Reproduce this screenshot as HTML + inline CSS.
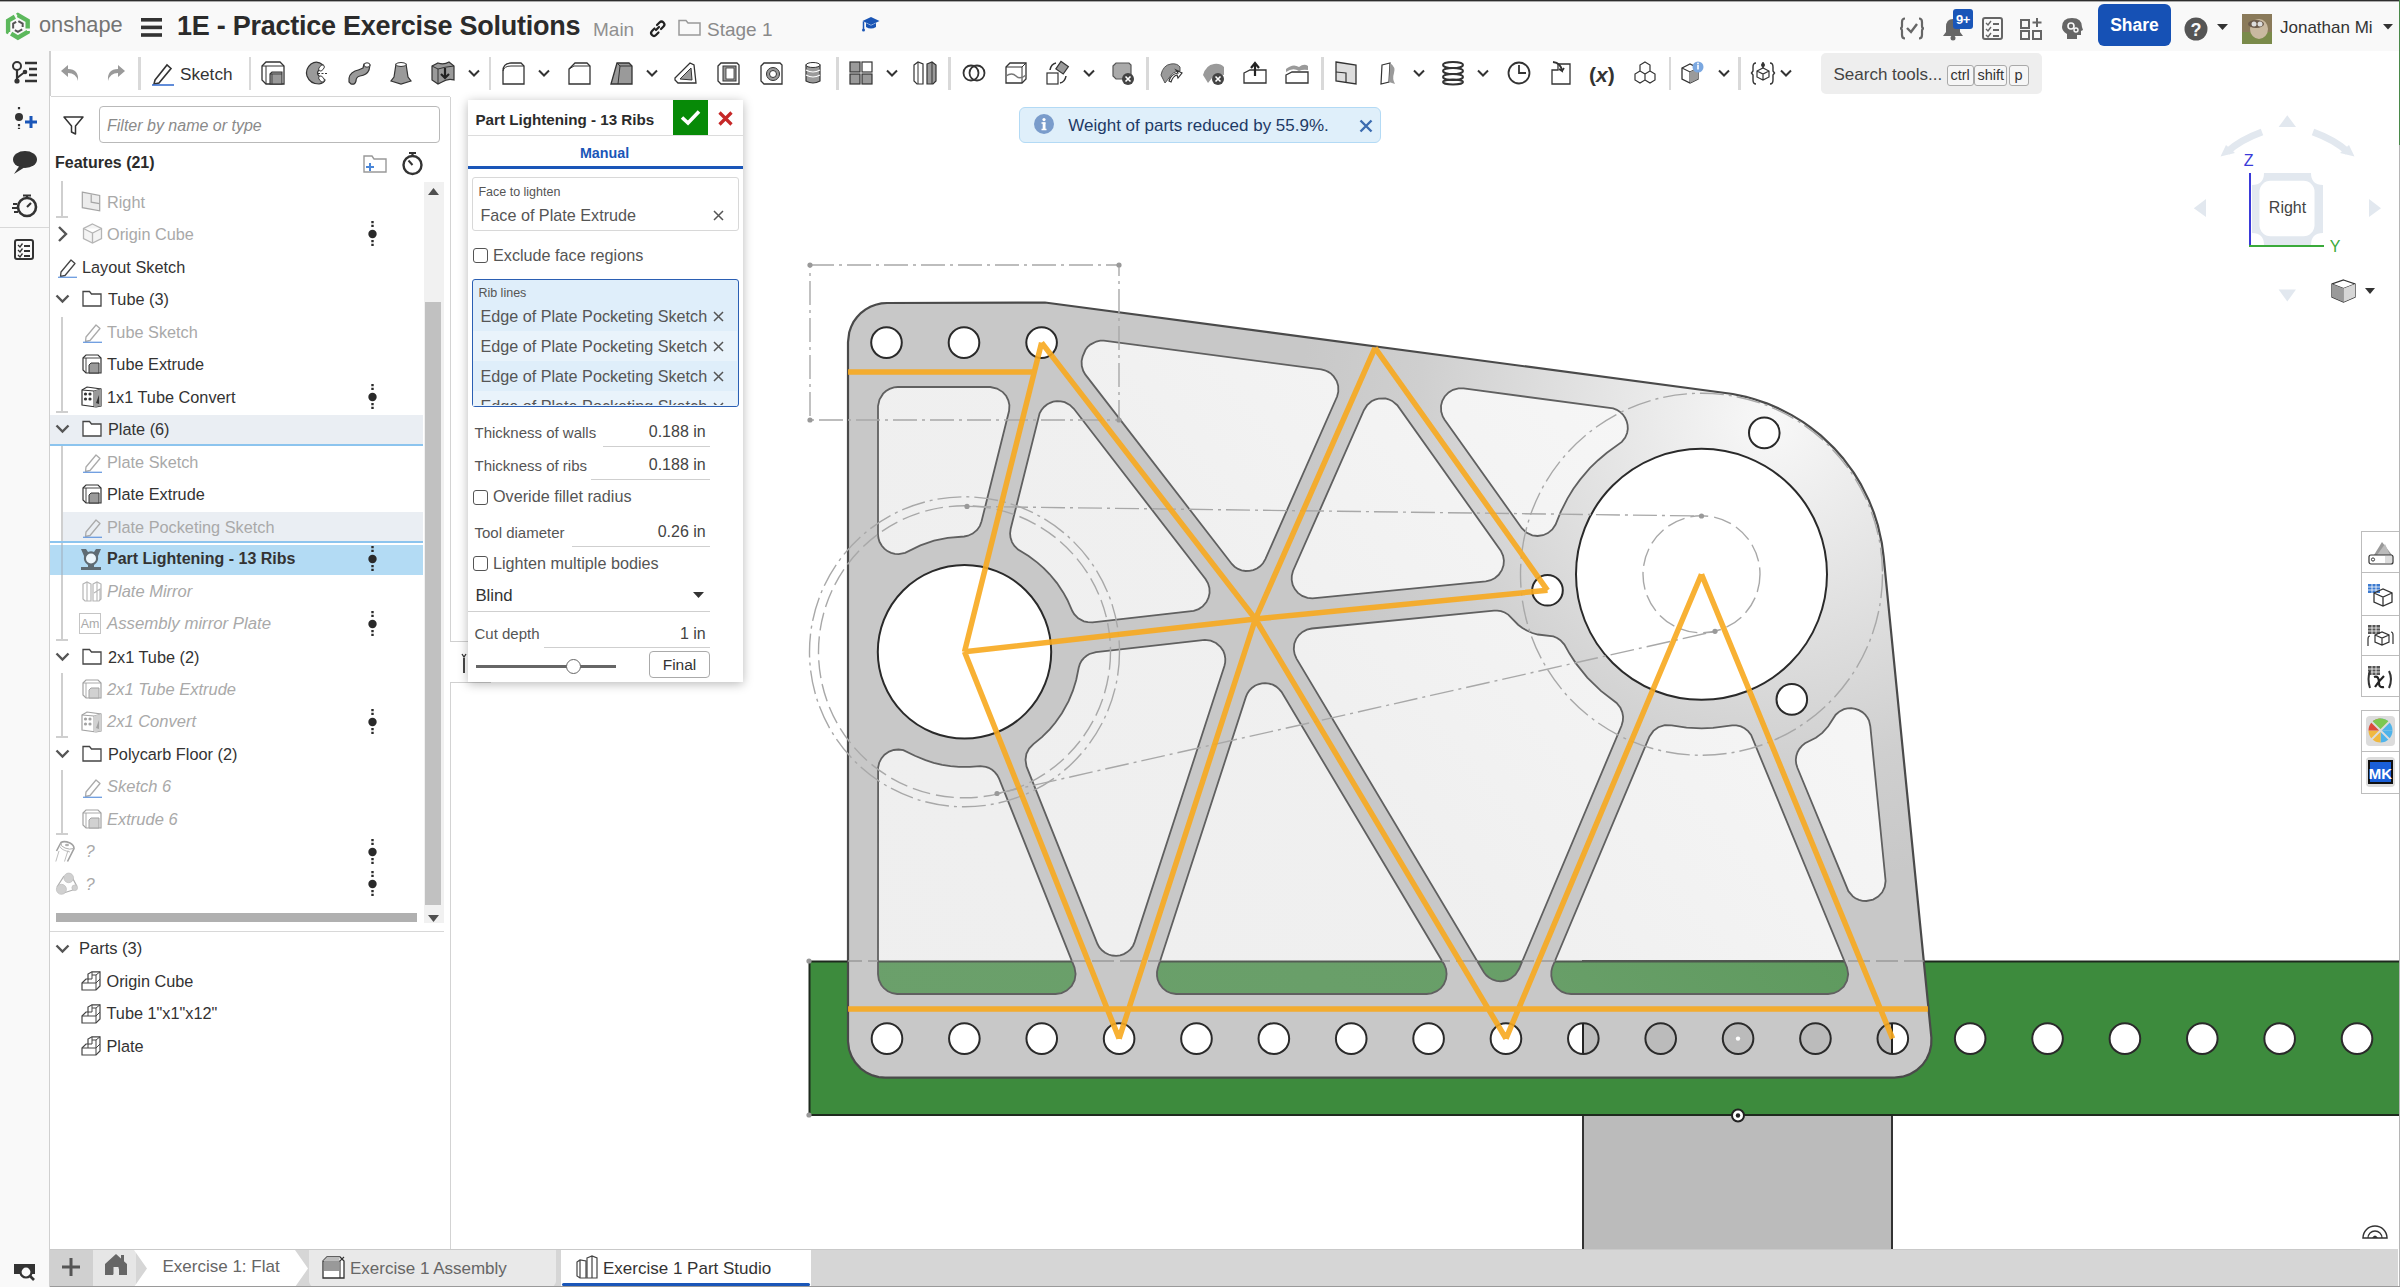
<!DOCTYPE html><html><head><meta charset="utf-8"><style>
*{margin:0;padding:0;box-sizing:border-box}
html,body{width:2400px;height:1287px;overflow:hidden;background:#fff;font-family:"Liberation Sans",sans-serif}
.t{position:absolute;white-space:nowrap;line-height:1}
svg{overflow:visible}
</style></head><body><svg style="position:absolute;left:0;top:0" width="2400" height="1287" viewBox="0 0 2400 1287">
<defs>
<radialGradient id="pg" gradientUnits="userSpaceOnUse" cx="1770" cy="420" r="470">
<stop offset="0" stop-color="#f8f8f8"/><stop offset="0.4" stop-color="#e2e2e2"/><stop offset="0.75" stop-color="#cfcfcf"/><stop offset="1" stop-color="#c8c8c8"/></radialGradient>
<linearGradient id="pkg" gradientUnits="userSpaceOnUse" x1="950" y1="1000" x2="1650" y2="380"><stop offset="0" stop-color="#cccccc" stop-opacity="0.32"/><stop offset="0.5" stop-color="#cccccc" stop-opacity="0.3"/><stop offset="1" stop-color="#cccccc" stop-opacity="0.17"/></linearGradient>
</defs>
<rect x="1583" y="961" width="309" height="300" fill="#bbbbbb" stroke="#333" stroke-width="2"/>
<path d="M809,961 L2400,961 L2400,1115 L809,1115 Z M902.30,1038.60 A15.30,15.30 0 1,0 871.70,1038.60 A15.30,15.30 0 1,0 902.30,1038.60ZM979.67,1038.60 A15.30,15.30 0 1,0 949.07,1038.60 A15.30,15.30 0 1,0 979.67,1038.60ZM1057.04,1038.60 A15.30,15.30 0 1,0 1026.44,1038.60 A15.30,15.30 0 1,0 1057.04,1038.60ZM1134.41,1038.60 A15.30,15.30 0 1,0 1103.81,1038.60 A15.30,15.30 0 1,0 1134.41,1038.60ZM1211.78,1038.60 A15.30,15.30 0 1,0 1181.18,1038.60 A15.30,15.30 0 1,0 1211.78,1038.60ZM1289.15,1038.60 A15.30,15.30 0 1,0 1258.55,1038.60 A15.30,15.30 0 1,0 1289.15,1038.60ZM1366.52,1038.60 A15.30,15.30 0 1,0 1335.92,1038.60 A15.30,15.30 0 1,0 1366.52,1038.60ZM1443.89,1038.60 A15.30,15.30 0 1,0 1413.29,1038.60 A15.30,15.30 0 1,0 1443.89,1038.60ZM1521.26,1038.60 A15.30,15.30 0 1,0 1490.66,1038.60 A15.30,15.30 0 1,0 1521.26,1038.60ZM1598.63,1038.60 A15.30,15.30 0 1,0 1568.03,1038.60 A15.30,15.30 0 1,0 1598.63,1038.60ZM1676.00,1038.60 A15.30,15.30 0 1,0 1645.40,1038.60 A15.30,15.30 0 1,0 1676.00,1038.60ZM1753.37,1038.60 A15.30,15.30 0 1,0 1722.77,1038.60 A15.30,15.30 0 1,0 1753.37,1038.60ZM1830.74,1038.60 A15.30,15.30 0 1,0 1800.14,1038.60 A15.30,15.30 0 1,0 1830.74,1038.60ZM1908.11,1038.60 A15.30,15.30 0 1,0 1877.51,1038.60 A15.30,15.30 0 1,0 1908.11,1038.60ZM1985.48,1038.60 A15.30,15.30 0 1,0 1954.88,1038.60 A15.30,15.30 0 1,0 1985.48,1038.60ZM2062.85,1038.60 A15.30,15.30 0 1,0 2032.25,1038.60 A15.30,15.30 0 1,0 2062.85,1038.60ZM2140.22,1038.60 A15.30,15.30 0 1,0 2109.62,1038.60 A15.30,15.30 0 1,0 2140.22,1038.60ZM2217.59,1038.60 A15.30,15.30 0 1,0 2186.99,1038.60 A15.30,15.30 0 1,0 2217.59,1038.60ZM2294.96,1038.60 A15.30,15.30 0 1,0 2264.36,1038.60 A15.30,15.30 0 1,0 2294.96,1038.60ZM2372.33,1038.60 A15.30,15.30 0 1,0 2341.73,1038.60 A15.30,15.30 0 1,0 2372.33,1038.60Z" fill="#3d8b3d" fill-rule="evenodd"/>
<path d="M809,961.5 L2400,961.5 M809,1115 L2400,1115 M809.5,961 L809.5,1115" stroke="#1e2a1e" stroke-width="2" fill="none"/>
<circle cx="1738" cy="1038.6" r="2.2" fill="#fff"/>
<clipPath id="matclip"><path d="M1045.0,302.5 L887.0,303.0 L881.3,303.4 L875.7,304.7 L870.3,306.7 L865.3,309.6 L860.8,313.1 L856.9,317.3 L853.5,321.9 L851.0,327.1 L849.2,332.5 L848.0,342.0 L848.0,1041.5 L849.1,1049.6 L851.6,1056.4 L855.3,1062.6 L860.8,1068.6 L866.8,1072.8 L872.5,1075.4 L878.7,1077.1 L885.0,1077.6 L1894.5,1077.6 L1902.6,1076.7 L1909.5,1074.4 L1916.5,1070.3 L1922.5,1064.8 L1926.7,1058.8 L1929.6,1052.2 L1931.2,1045.1 L1931.4,1037.9 L1883.6,556.4 L1881.8,543.0 L1877.9,525.5 L1873.8,512.6 L1868.8,500.1 L1860.7,484.1 L1853.7,472.6 L1843.0,458.2 L1834.0,448.1 L1821.0,435.7 L1810.5,427.3 L1803.2,422.1 L1791.7,415.1 L1779.7,408.9 L1767.4,403.6 L1754.6,399.2 L1746.0,396.8 L1732.8,394.0 L1045.0,302.5Z M1815.9,737.8 L1805.0,743.3 L1801.9,745.8 L1799.4,748.8 L1797.5,752.2 L1796.3,756.0 L1795.8,759.9 L1796.2,763.8 L1797.4,767.8 L1848.4,891.2 L1852.8,896.4 L1855.4,898.2 L1859.0,899.9 L1862.5,900.8 L1866.4,901.0 L1873.1,899.6 L1878.2,896.6 L1882.2,892.3 L1884.7,887.0 L1885.6,880.9 L1870.3,726.2 L1869.0,720.6 L1867.5,717.8 L1865.2,714.7 L1862.3,712.1 L1858.9,710.1 L1855.3,708.8 L1851.4,708.2 L1847.5,708.4 L1844.0,709.2 L1839.6,711.4 L1835.7,714.7 L1828.2,726.3 L1822.3,732.9 L1815.9,737.8ZM1671.6,725.4 L1664.8,725.2 L1658.3,727.2 L1653.4,730.9 L1649.5,736.4 L1552.4,967.0 L1551.4,971.1 L1551.3,975.8 L1552.3,980.6 L1554.1,984.3 L1557.1,988.2 L1561.6,991.6 L1566.2,993.4 L1571.1,994.0 L1828.1,994.0 L1833.8,993.2 L1838.5,991.1 L1843.7,986.6 L1847.0,980.6 L1848.2,974.2 L1847.0,967.4 L1751.1,734.9 L1748.1,731.1 L1744.5,728.2 L1740.8,726.4 L1736.3,725.4 L1732.2,725.3 L1713.0,727.9 L1701.6,728.3 L1686.5,727.6 L1671.6,725.4ZM1463.6,388.4 L1458.5,388.3 L1453.0,389.8 L1448.6,392.4 L1444.7,396.5 L1442.3,400.8 L1441.0,405.9 L1441.2,411.5 L1442.7,416.5 L1444.6,419.8 L1521.8,528.2 L1526.3,532.5 L1532.3,535.3 L1537.5,536.0 L1543.1,535.2 L1547.9,533.1 L1552.3,529.5 L1555.6,524.6 L1560.8,511.7 L1567.4,498.6 L1573.4,488.8 L1580.1,479.6 L1589.8,468.2 L1598.1,460.2 L1606.9,452.8 L1621.8,441.9 L1625.2,437.5 L1627.1,433.0 L1627.8,429.0 L1627.6,425.1 L1626.7,421.3 L1625.1,417.8 L1622.9,414.6 L1620.1,411.9 L1616.8,409.8 L1613.2,408.4 L1463.6,388.4ZM1311.9,628.5 L1306.9,629.6 L1302.5,631.9 L1298.9,635.1 L1296.1,639.1 L1294.3,643.7 L1293.8,649.3 L1294.6,654.1 L1296.5,658.6 L1484.0,972.5 L1486.5,975.5 L1489.3,977.8 L1492.8,979.7 L1496.5,980.8 L1500.4,981.3 L1503.6,981.0 L1507.4,980.1 L1510.7,978.5 L1515.4,974.7 L1519.0,969.1 L1621.6,725.5 L1622.8,721.0 L1623.1,716.8 L1622.3,712.3 L1620.4,707.8 L1616.6,703.0 L1600.9,690.9 L1587.3,677.6 L1575.7,663.1 L1569.5,653.6 L1564.4,644.6 L1560.4,640.2 L1557.1,638.0 L1553.4,636.4 L1537.8,634.5 L1532.3,633.0 L1527.3,630.8 L1522.4,628.0 L1518.1,624.7 L1508.2,614.6 L1504.7,612.5 L1501.0,611.1 L1497.2,610.6 L1494.0,610.6 L1311.9,628.5ZM1485.8,581.3 L1490.7,580.2 L1495.0,578.0 L1498.7,574.8 L1501.8,570.2 L1503.5,565.4 L1503.9,560.6 L1503.1,555.8 L1500.8,550.7 L1397.3,405.2 L1392.1,400.9 L1388.5,399.3 L1385.4,398.5 L1378.6,398.6 L1375.0,399.6 L1371.5,401.3 L1367.1,405.2 L1363.9,410.2 L1293.0,571.0 L1291.8,575.8 L1291.7,580.0 L1292.7,584.9 L1294.8,589.1 L1297.9,592.9 L1302.2,595.9 L1307.5,597.9 L1312.4,598.3 L1485.8,581.3ZM1426.6,994.0 L1431.6,993.4 L1436.8,991.2 L1440.9,988.1 L1443.9,984.2 L1446.0,979.0 L1446.6,974.1 L1446.0,969.0 L1444.2,964.5 L1281.5,691.9 L1279.1,689.1 L1276.2,686.6 L1272.8,684.7 L1269.1,683.6 L1265.2,683.1 L1262.0,683.3 L1258.3,684.3 L1254.9,685.8 L1251.8,688.0 L1249.5,690.3 L1247.4,693.5 L1245.9,696.9 L1157.9,967.8 L1157.0,971.8 L1157.0,975.8 L1157.7,979.7 L1159.6,984.0 L1162.7,988.1 L1166.6,991.2 L1171.1,993.2 L1176.0,994.0 L1426.6,994.0ZM1082.7,356.3 L1081.6,361.1 L1081.8,366.0 L1083.2,370.8 L1085.2,374.4 L1231.8,564.0 L1234.6,566.7 L1238.0,568.9 L1241.6,570.3 L1245.5,571.0 L1249.4,570.9 L1253.2,570.1 L1256.9,568.5 L1260.1,566.3 L1263.0,563.3 L1265.4,559.1 L1337.1,396.5 L1338.3,391.6 L1338.2,386.0 L1336.7,381.1 L1333.7,376.4 L1331.0,373.6 L1328.3,371.9 L1324.8,370.3 L1321.2,369.4 L1103.8,340.6 L1100.2,340.7 L1096.3,341.5 L1090.3,344.6 L1087.4,347.2 L1085.5,349.8 L1082.7,356.3ZM1033.4,744.1 L1029.1,748.5 L1026.4,753.9 L1025.5,759.8 L1026.5,766.4 L1097.5,944.0 L1099.4,947.4 L1102.0,950.3 L1105.1,952.7 L1108.6,954.5 L1112.3,955.5 L1116.2,955.8 L1120.1,955.3 L1123.8,954.1 L1127.2,952.1 L1130.4,949.4 L1133.1,945.7 L1134.7,941.9 L1224.4,666.0 L1225.2,662.4 L1225.3,658.5 L1224.6,654.6 L1223.3,651.0 L1220.4,646.8 L1216.0,643.0 L1210.7,640.6 L1204.9,639.9 L1096.0,652.1 L1089.4,654.0 L1086.6,655.7 L1083.8,658.1 L1081.7,660.6 L1079.9,663.9 L1078.7,667.7 L1076.2,680.0 L1072.9,690.7 L1068.6,701.2 L1061.9,713.3 L1055.4,722.5 L1049.7,729.3 L1041.9,737.1 L1033.4,744.1ZM1010.7,528.7 L1010.1,533.4 L1010.5,537.5 L1012.0,542.1 L1014.4,546.0 L1018.1,549.6 L1028.6,556.1 L1037.4,562.6 L1043.9,568.3 L1049.7,574.3 L1057.0,583.1 L1063.2,592.4 L1067.4,600.0 L1072.2,610.8 L1074.2,614.1 L1078.2,618.3 L1083.9,621.3 L1087.9,622.2 L1092.5,622.3 L1193.7,610.8 L1198.6,609.1 L1202.7,606.4 L1206.4,602.1 L1208.5,597.7 L1209.6,592.9 L1209.4,588.0 L1208.0,583.3 L1205.5,579.0 L1073.9,408.8 L1069.8,404.9 L1064.7,402.2 L1060.9,401.3 L1057.0,401.2 L1053.2,401.7 L1050.2,402.8 L1047.0,404.5 L1044.0,407.0 L1041.5,410.0 L1039.6,413.4 L1010.7,528.7ZM915.4,756.0 L903.3,750.2 L898.5,749.5 L893.7,750.0 L889.1,751.6 L884.5,754.7 L881.4,758.4 L879.2,762.7 L878.1,767.5 L878.0,974.1 L878.8,979.7 L881.3,985.0 L883.9,988.2 L887.8,991.2 L892.3,993.2 L897.1,994.0 L1055.6,994.0 L1061.5,993.1 L1066.7,990.6 L1071.7,985.9 L1074.6,980.1 L1075.6,974.1 L1074.5,967.6 L999.1,778.7 L997.2,775.1 L994.8,772.1 L992.1,769.8 L988.7,767.8 L985.8,766.8 L980.3,766.1 L970.0,766.9 L958.9,766.9 L950.5,766.1 L942.2,764.8 L933.7,762.8 L925.5,760.2 L915.4,756.0ZM878.0,534.0 L878.4,538.1 L879.5,541.8 L881.8,545.8 L884.3,548.7 L887.4,551.1 L891.1,552.9 L894.9,553.8 L898.7,554.1 L905.1,552.8 L920.4,545.4 L934.0,540.7 L947.7,537.8 L964.2,536.5 L968.0,535.7 L972.7,533.6 L977.1,529.9 L979.9,525.9 L981.5,521.5 L1009.1,410.8 L1009.4,405.1 L1008.3,400.4 L1006.2,396.0 L1002.8,392.1 L997.0,388.5 L990.3,387.0 L897.9,387.0 L894.0,387.4 L889.6,388.9 L886.0,391.0 L883.1,393.7 L879.5,399.5 L878.0,406.1 L878.0,534.0Z M902.30,1038.60 A15.30,15.30 0 1,0 871.70,1038.60 A15.30,15.30 0 1,0 902.30,1038.60ZM979.67,1038.60 A15.30,15.30 0 1,0 949.07,1038.60 A15.30,15.30 0 1,0 979.67,1038.60ZM1057.04,1038.60 A15.30,15.30 0 1,0 1026.44,1038.60 A15.30,15.30 0 1,0 1057.04,1038.60ZM1134.41,1038.60 A15.30,15.30 0 1,0 1103.81,1038.60 A15.30,15.30 0 1,0 1134.41,1038.60ZM1211.78,1038.60 A15.30,15.30 0 1,0 1181.18,1038.60 A15.30,15.30 0 1,0 1211.78,1038.60ZM1289.15,1038.60 A15.30,15.30 0 1,0 1258.55,1038.60 A15.30,15.30 0 1,0 1289.15,1038.60ZM1366.52,1038.60 A15.30,15.30 0 1,0 1335.92,1038.60 A15.30,15.30 0 1,0 1366.52,1038.60ZM1443.89,1038.60 A15.30,15.30 0 1,0 1413.29,1038.60 A15.30,15.30 0 1,0 1443.89,1038.60ZM1521.26,1038.60 A15.30,15.30 0 1,0 1490.66,1038.60 A15.30,15.30 0 1,0 1521.26,1038.60ZM1598.63,1038.60 A15.30,15.30 0 1,0 1568.03,1038.60 A15.30,15.30 0 1,0 1598.63,1038.60ZM1676.00,1038.60 A15.30,15.30 0 1,0 1645.40,1038.60 A15.30,15.30 0 1,0 1676.00,1038.60ZM1753.37,1038.60 A15.30,15.30 0 1,0 1722.77,1038.60 A15.30,15.30 0 1,0 1753.37,1038.60ZM1830.74,1038.60 A15.30,15.30 0 1,0 1800.14,1038.60 A15.30,15.30 0 1,0 1830.74,1038.60ZM1908.11,1038.60 A15.30,15.30 0 1,0 1877.51,1038.60 A15.30,15.30 0 1,0 1908.11,1038.60ZM901.80,342.60 A15.30,15.30 0 1,0 871.20,342.60 A15.30,15.30 0 1,0 901.80,342.60ZM979.30,342.60 A15.30,15.30 0 1,0 948.70,342.60 A15.30,15.30 0 1,0 979.30,342.60ZM1056.90,342.60 A15.30,15.30 0 1,0 1026.30,342.60 A15.30,15.30 0 1,0 1056.90,342.60ZM1779.60,432.90 A15.30,15.30 0 1,0 1749.00,432.90 A15.30,15.30 0 1,0 1779.60,432.90ZM1807.10,699.40 A15.30,15.30 0 1,0 1776.50,699.40 A15.30,15.30 0 1,0 1807.10,699.40ZM1562.80,590.30 A15.30,15.30 0 1,0 1532.20,590.30 A15.30,15.30 0 1,0 1562.80,590.30ZM1051.20,651.80 A86.70,86.70 0 1,0 877.80,651.80 A86.70,86.70 0 1,0 1051.20,651.80ZM1827.00,574.30 A125.50,125.50 0 1,0 1576.00,574.30 A125.50,125.50 0 1,0 1827.00,574.30Z" clip-rule="evenodd"/></clipPath>
<path d="M1045.0,302.5 L887.0,303.0 L881.3,303.4 L875.7,304.7 L870.3,306.7 L865.3,309.6 L860.8,313.1 L856.9,317.3 L853.5,321.9 L851.0,327.1 L849.2,332.5 L848.0,342.0 L848.0,1041.5 L849.1,1049.6 L851.6,1056.4 L855.3,1062.6 L860.8,1068.6 L866.8,1072.8 L872.5,1075.4 L878.7,1077.1 L885.0,1077.6 L1894.5,1077.6 L1902.6,1076.7 L1909.5,1074.4 L1916.5,1070.3 L1922.5,1064.8 L1926.7,1058.8 L1929.6,1052.2 L1931.2,1045.1 L1931.4,1037.9 L1883.6,556.4 L1881.8,543.0 L1877.9,525.5 L1873.8,512.6 L1868.8,500.1 L1860.7,484.1 L1853.7,472.6 L1843.0,458.2 L1834.0,448.1 L1821.0,435.7 L1810.5,427.3 L1803.2,422.1 L1791.7,415.1 L1779.7,408.9 L1767.4,403.6 L1754.6,399.2 L1746.0,396.8 L1732.8,394.0 L1045.0,302.5Z M1815.9,737.8 L1805.0,743.3 L1801.9,745.8 L1799.4,748.8 L1797.5,752.2 L1796.3,756.0 L1795.8,759.9 L1796.2,763.8 L1797.4,767.8 L1848.4,891.2 L1852.8,896.4 L1855.4,898.2 L1859.0,899.9 L1862.5,900.8 L1866.4,901.0 L1873.1,899.6 L1878.2,896.6 L1882.2,892.3 L1884.7,887.0 L1885.6,880.9 L1870.3,726.2 L1869.0,720.6 L1867.5,717.8 L1865.2,714.7 L1862.3,712.1 L1858.9,710.1 L1855.3,708.8 L1851.4,708.2 L1847.5,708.4 L1844.0,709.2 L1839.6,711.4 L1835.7,714.7 L1828.2,726.3 L1822.3,732.9 L1815.9,737.8ZM1671.6,725.4 L1664.8,725.2 L1658.3,727.2 L1653.4,730.9 L1649.5,736.4 L1552.4,967.0 L1551.4,971.1 L1551.3,975.8 L1552.3,980.6 L1554.1,984.3 L1557.1,988.2 L1561.6,991.6 L1566.2,993.4 L1571.1,994.0 L1828.1,994.0 L1833.8,993.2 L1838.5,991.1 L1843.7,986.6 L1847.0,980.6 L1848.2,974.2 L1847.0,967.4 L1751.1,734.9 L1748.1,731.1 L1744.5,728.2 L1740.8,726.4 L1736.3,725.4 L1732.2,725.3 L1713.0,727.9 L1701.6,728.3 L1686.5,727.6 L1671.6,725.4ZM1463.6,388.4 L1458.5,388.3 L1453.0,389.8 L1448.6,392.4 L1444.7,396.5 L1442.3,400.8 L1441.0,405.9 L1441.2,411.5 L1442.7,416.5 L1444.6,419.8 L1521.8,528.2 L1526.3,532.5 L1532.3,535.3 L1537.5,536.0 L1543.1,535.2 L1547.9,533.1 L1552.3,529.5 L1555.6,524.6 L1560.8,511.7 L1567.4,498.6 L1573.4,488.8 L1580.1,479.6 L1589.8,468.2 L1598.1,460.2 L1606.9,452.8 L1621.8,441.9 L1625.2,437.5 L1627.1,433.0 L1627.8,429.0 L1627.6,425.1 L1626.7,421.3 L1625.1,417.8 L1622.9,414.6 L1620.1,411.9 L1616.8,409.8 L1613.2,408.4 L1463.6,388.4ZM1311.9,628.5 L1306.9,629.6 L1302.5,631.9 L1298.9,635.1 L1296.1,639.1 L1294.3,643.7 L1293.8,649.3 L1294.6,654.1 L1296.5,658.6 L1484.0,972.5 L1486.5,975.5 L1489.3,977.8 L1492.8,979.7 L1496.5,980.8 L1500.4,981.3 L1503.6,981.0 L1507.4,980.1 L1510.7,978.5 L1515.4,974.7 L1519.0,969.1 L1621.6,725.5 L1622.8,721.0 L1623.1,716.8 L1622.3,712.3 L1620.4,707.8 L1616.6,703.0 L1600.9,690.9 L1587.3,677.6 L1575.7,663.1 L1569.5,653.6 L1564.4,644.6 L1560.4,640.2 L1557.1,638.0 L1553.4,636.4 L1537.8,634.5 L1532.3,633.0 L1527.3,630.8 L1522.4,628.0 L1518.1,624.7 L1508.2,614.6 L1504.7,612.5 L1501.0,611.1 L1497.2,610.6 L1494.0,610.6 L1311.9,628.5ZM1485.8,581.3 L1490.7,580.2 L1495.0,578.0 L1498.7,574.8 L1501.8,570.2 L1503.5,565.4 L1503.9,560.6 L1503.1,555.8 L1500.8,550.7 L1397.3,405.2 L1392.1,400.9 L1388.5,399.3 L1385.4,398.5 L1378.6,398.6 L1375.0,399.6 L1371.5,401.3 L1367.1,405.2 L1363.9,410.2 L1293.0,571.0 L1291.8,575.8 L1291.7,580.0 L1292.7,584.9 L1294.8,589.1 L1297.9,592.9 L1302.2,595.9 L1307.5,597.9 L1312.4,598.3 L1485.8,581.3ZM1426.6,994.0 L1431.6,993.4 L1436.8,991.2 L1440.9,988.1 L1443.9,984.2 L1446.0,979.0 L1446.6,974.1 L1446.0,969.0 L1444.2,964.5 L1281.5,691.9 L1279.1,689.1 L1276.2,686.6 L1272.8,684.7 L1269.1,683.6 L1265.2,683.1 L1262.0,683.3 L1258.3,684.3 L1254.9,685.8 L1251.8,688.0 L1249.5,690.3 L1247.4,693.5 L1245.9,696.9 L1157.9,967.8 L1157.0,971.8 L1157.0,975.8 L1157.7,979.7 L1159.6,984.0 L1162.7,988.1 L1166.6,991.2 L1171.1,993.2 L1176.0,994.0 L1426.6,994.0ZM1082.7,356.3 L1081.6,361.1 L1081.8,366.0 L1083.2,370.8 L1085.2,374.4 L1231.8,564.0 L1234.6,566.7 L1238.0,568.9 L1241.6,570.3 L1245.5,571.0 L1249.4,570.9 L1253.2,570.1 L1256.9,568.5 L1260.1,566.3 L1263.0,563.3 L1265.4,559.1 L1337.1,396.5 L1338.3,391.6 L1338.2,386.0 L1336.7,381.1 L1333.7,376.4 L1331.0,373.6 L1328.3,371.9 L1324.8,370.3 L1321.2,369.4 L1103.8,340.6 L1100.2,340.7 L1096.3,341.5 L1090.3,344.6 L1087.4,347.2 L1085.5,349.8 L1082.7,356.3ZM1033.4,744.1 L1029.1,748.5 L1026.4,753.9 L1025.5,759.8 L1026.5,766.4 L1097.5,944.0 L1099.4,947.4 L1102.0,950.3 L1105.1,952.7 L1108.6,954.5 L1112.3,955.5 L1116.2,955.8 L1120.1,955.3 L1123.8,954.1 L1127.2,952.1 L1130.4,949.4 L1133.1,945.7 L1134.7,941.9 L1224.4,666.0 L1225.2,662.4 L1225.3,658.5 L1224.6,654.6 L1223.3,651.0 L1220.4,646.8 L1216.0,643.0 L1210.7,640.6 L1204.9,639.9 L1096.0,652.1 L1089.4,654.0 L1086.6,655.7 L1083.8,658.1 L1081.7,660.6 L1079.9,663.9 L1078.7,667.7 L1076.2,680.0 L1072.9,690.7 L1068.6,701.2 L1061.9,713.3 L1055.4,722.5 L1049.7,729.3 L1041.9,737.1 L1033.4,744.1ZM1010.7,528.7 L1010.1,533.4 L1010.5,537.5 L1012.0,542.1 L1014.4,546.0 L1018.1,549.6 L1028.6,556.1 L1037.4,562.6 L1043.9,568.3 L1049.7,574.3 L1057.0,583.1 L1063.2,592.4 L1067.4,600.0 L1072.2,610.8 L1074.2,614.1 L1078.2,618.3 L1083.9,621.3 L1087.9,622.2 L1092.5,622.3 L1193.7,610.8 L1198.6,609.1 L1202.7,606.4 L1206.4,602.1 L1208.5,597.7 L1209.6,592.9 L1209.4,588.0 L1208.0,583.3 L1205.5,579.0 L1073.9,408.8 L1069.8,404.9 L1064.7,402.2 L1060.9,401.3 L1057.0,401.2 L1053.2,401.7 L1050.2,402.8 L1047.0,404.5 L1044.0,407.0 L1041.5,410.0 L1039.6,413.4 L1010.7,528.7ZM915.4,756.0 L903.3,750.2 L898.5,749.5 L893.7,750.0 L889.1,751.6 L884.5,754.7 L881.4,758.4 L879.2,762.7 L878.1,767.5 L878.0,974.1 L878.8,979.7 L881.3,985.0 L883.9,988.2 L887.8,991.2 L892.3,993.2 L897.1,994.0 L1055.6,994.0 L1061.5,993.1 L1066.7,990.6 L1071.7,985.9 L1074.6,980.1 L1075.6,974.1 L1074.5,967.6 L999.1,778.7 L997.2,775.1 L994.8,772.1 L992.1,769.8 L988.7,767.8 L985.8,766.8 L980.3,766.1 L970.0,766.9 L958.9,766.9 L950.5,766.1 L942.2,764.8 L933.7,762.8 L925.5,760.2 L915.4,756.0ZM878.0,534.0 L878.4,538.1 L879.5,541.8 L881.8,545.8 L884.3,548.7 L887.4,551.1 L891.1,552.9 L894.9,553.8 L898.7,554.1 L905.1,552.8 L920.4,545.4 L934.0,540.7 L947.7,537.8 L964.2,536.5 L968.0,535.7 L972.7,533.6 L977.1,529.9 L979.9,525.9 L981.5,521.5 L1009.1,410.8 L1009.4,405.1 L1008.3,400.4 L1006.2,396.0 L1002.8,392.1 L997.0,388.5 L990.3,387.0 L897.9,387.0 L894.0,387.4 L889.6,388.9 L886.0,391.0 L883.1,393.7 L879.5,399.5 L878.0,406.1 L878.0,534.0Z M902.30,1038.60 A15.30,15.30 0 1,0 871.70,1038.60 A15.30,15.30 0 1,0 902.30,1038.60ZM979.67,1038.60 A15.30,15.30 0 1,0 949.07,1038.60 A15.30,15.30 0 1,0 979.67,1038.60ZM1057.04,1038.60 A15.30,15.30 0 1,0 1026.44,1038.60 A15.30,15.30 0 1,0 1057.04,1038.60ZM1134.41,1038.60 A15.30,15.30 0 1,0 1103.81,1038.60 A15.30,15.30 0 1,0 1134.41,1038.60ZM1211.78,1038.60 A15.30,15.30 0 1,0 1181.18,1038.60 A15.30,15.30 0 1,0 1211.78,1038.60ZM1289.15,1038.60 A15.30,15.30 0 1,0 1258.55,1038.60 A15.30,15.30 0 1,0 1289.15,1038.60ZM1366.52,1038.60 A15.30,15.30 0 1,0 1335.92,1038.60 A15.30,15.30 0 1,0 1366.52,1038.60ZM1443.89,1038.60 A15.30,15.30 0 1,0 1413.29,1038.60 A15.30,15.30 0 1,0 1443.89,1038.60ZM1521.26,1038.60 A15.30,15.30 0 1,0 1490.66,1038.60 A15.30,15.30 0 1,0 1521.26,1038.60ZM1598.63,1038.60 A15.30,15.30 0 1,0 1568.03,1038.60 A15.30,15.30 0 1,0 1598.63,1038.60ZM1676.00,1038.60 A15.30,15.30 0 1,0 1645.40,1038.60 A15.30,15.30 0 1,0 1676.00,1038.60ZM1753.37,1038.60 A15.30,15.30 0 1,0 1722.77,1038.60 A15.30,15.30 0 1,0 1753.37,1038.60ZM1830.74,1038.60 A15.30,15.30 0 1,0 1800.14,1038.60 A15.30,15.30 0 1,0 1830.74,1038.60ZM1908.11,1038.60 A15.30,15.30 0 1,0 1877.51,1038.60 A15.30,15.30 0 1,0 1908.11,1038.60ZM901.80,342.60 A15.30,15.30 0 1,0 871.20,342.60 A15.30,15.30 0 1,0 901.80,342.60ZM979.30,342.60 A15.30,15.30 0 1,0 948.70,342.60 A15.30,15.30 0 1,0 979.30,342.60ZM1056.90,342.60 A15.30,15.30 0 1,0 1026.30,342.60 A15.30,15.30 0 1,0 1056.90,342.60ZM1779.60,432.90 A15.30,15.30 0 1,0 1749.00,432.90 A15.30,15.30 0 1,0 1779.60,432.90ZM1807.10,699.40 A15.30,15.30 0 1,0 1776.50,699.40 A15.30,15.30 0 1,0 1807.10,699.40ZM1562.80,590.30 A15.30,15.30 0 1,0 1532.20,590.30 A15.30,15.30 0 1,0 1562.80,590.30ZM1051.20,651.80 A86.70,86.70 0 1,0 877.80,651.80 A86.70,86.70 0 1,0 1051.20,651.80ZM1827.00,574.30 A125.50,125.50 0 1,0 1576.00,574.30 A125.50,125.50 0 1,0 1827.00,574.30Z" fill="url(#pg)" fill-rule="evenodd"/>
<path d="M1045.0,302.5 L887.0,303.0 L881.3,303.4 L875.7,304.7 L870.3,306.7 L865.3,309.6 L860.8,313.1 L856.9,317.3 L853.5,321.9 L851.0,327.1 L849.2,332.5 L848.0,342.0 L848.0,1041.5 L849.1,1049.6 L851.6,1056.4 L855.3,1062.6 L860.8,1068.6 L866.8,1072.8 L872.5,1075.4 L878.7,1077.1 L885.0,1077.6 L1894.5,1077.6 L1902.6,1076.7 L1909.5,1074.4 L1916.5,1070.3 L1922.5,1064.8 L1926.7,1058.8 L1929.6,1052.2 L1931.2,1045.1 L1931.4,1037.9 L1883.6,556.4 L1881.8,543.0 L1877.9,525.5 L1873.8,512.6 L1868.8,500.1 L1860.7,484.1 L1853.7,472.6 L1843.0,458.2 L1834.0,448.1 L1821.0,435.7 L1810.5,427.3 L1803.2,422.1 L1791.7,415.1 L1779.7,408.9 L1767.4,403.6 L1754.6,399.2 L1746.0,396.8 L1732.8,394.0 L1045.0,302.5Z" fill="none" stroke="#4a4a4a" stroke-width="2.2"/>
<path d="M1815.9,737.8 L1805.0,743.3 L1801.9,745.8 L1799.4,748.8 L1797.5,752.2 L1796.3,756.0 L1795.8,759.9 L1796.2,763.8 L1797.4,767.8 L1848.4,891.2 L1852.8,896.4 L1855.4,898.2 L1859.0,899.9 L1862.5,900.8 L1866.4,901.0 L1873.1,899.6 L1878.2,896.6 L1882.2,892.3 L1884.7,887.0 L1885.6,880.9 L1870.3,726.2 L1869.0,720.6 L1867.5,717.8 L1865.2,714.7 L1862.3,712.1 L1858.9,710.1 L1855.3,708.8 L1851.4,708.2 L1847.5,708.4 L1844.0,709.2 L1839.6,711.4 L1835.7,714.7 L1828.2,726.3 L1822.3,732.9 L1815.9,737.8ZM1671.6,725.4 L1664.8,725.2 L1658.3,727.2 L1653.4,730.9 L1649.5,736.4 L1552.4,967.0 L1551.4,971.1 L1551.3,975.8 L1552.3,980.6 L1554.1,984.3 L1557.1,988.2 L1561.6,991.6 L1566.2,993.4 L1571.1,994.0 L1828.1,994.0 L1833.8,993.2 L1838.5,991.1 L1843.7,986.6 L1847.0,980.6 L1848.2,974.2 L1847.0,967.4 L1751.1,734.9 L1748.1,731.1 L1744.5,728.2 L1740.8,726.4 L1736.3,725.4 L1732.2,725.3 L1713.0,727.9 L1701.6,728.3 L1686.5,727.6 L1671.6,725.4ZM1463.6,388.4 L1458.5,388.3 L1453.0,389.8 L1448.6,392.4 L1444.7,396.5 L1442.3,400.8 L1441.0,405.9 L1441.2,411.5 L1442.7,416.5 L1444.6,419.8 L1521.8,528.2 L1526.3,532.5 L1532.3,535.3 L1537.5,536.0 L1543.1,535.2 L1547.9,533.1 L1552.3,529.5 L1555.6,524.6 L1560.8,511.7 L1567.4,498.6 L1573.4,488.8 L1580.1,479.6 L1589.8,468.2 L1598.1,460.2 L1606.9,452.8 L1621.8,441.9 L1625.2,437.5 L1627.1,433.0 L1627.8,429.0 L1627.6,425.1 L1626.7,421.3 L1625.1,417.8 L1622.9,414.6 L1620.1,411.9 L1616.8,409.8 L1613.2,408.4 L1463.6,388.4ZM1311.9,628.5 L1306.9,629.6 L1302.5,631.9 L1298.9,635.1 L1296.1,639.1 L1294.3,643.7 L1293.8,649.3 L1294.6,654.1 L1296.5,658.6 L1484.0,972.5 L1486.5,975.5 L1489.3,977.8 L1492.8,979.7 L1496.5,980.8 L1500.4,981.3 L1503.6,981.0 L1507.4,980.1 L1510.7,978.5 L1515.4,974.7 L1519.0,969.1 L1621.6,725.5 L1622.8,721.0 L1623.1,716.8 L1622.3,712.3 L1620.4,707.8 L1616.6,703.0 L1600.9,690.9 L1587.3,677.6 L1575.7,663.1 L1569.5,653.6 L1564.4,644.6 L1560.4,640.2 L1557.1,638.0 L1553.4,636.4 L1537.8,634.5 L1532.3,633.0 L1527.3,630.8 L1522.4,628.0 L1518.1,624.7 L1508.2,614.6 L1504.7,612.5 L1501.0,611.1 L1497.2,610.6 L1494.0,610.6 L1311.9,628.5ZM1485.8,581.3 L1490.7,580.2 L1495.0,578.0 L1498.7,574.8 L1501.8,570.2 L1503.5,565.4 L1503.9,560.6 L1503.1,555.8 L1500.8,550.7 L1397.3,405.2 L1392.1,400.9 L1388.5,399.3 L1385.4,398.5 L1378.6,398.6 L1375.0,399.6 L1371.5,401.3 L1367.1,405.2 L1363.9,410.2 L1293.0,571.0 L1291.8,575.8 L1291.7,580.0 L1292.7,584.9 L1294.8,589.1 L1297.9,592.9 L1302.2,595.9 L1307.5,597.9 L1312.4,598.3 L1485.8,581.3ZM1426.6,994.0 L1431.6,993.4 L1436.8,991.2 L1440.9,988.1 L1443.9,984.2 L1446.0,979.0 L1446.6,974.1 L1446.0,969.0 L1444.2,964.5 L1281.5,691.9 L1279.1,689.1 L1276.2,686.6 L1272.8,684.7 L1269.1,683.6 L1265.2,683.1 L1262.0,683.3 L1258.3,684.3 L1254.9,685.8 L1251.8,688.0 L1249.5,690.3 L1247.4,693.5 L1245.9,696.9 L1157.9,967.8 L1157.0,971.8 L1157.0,975.8 L1157.7,979.7 L1159.6,984.0 L1162.7,988.1 L1166.6,991.2 L1171.1,993.2 L1176.0,994.0 L1426.6,994.0ZM1082.7,356.3 L1081.6,361.1 L1081.8,366.0 L1083.2,370.8 L1085.2,374.4 L1231.8,564.0 L1234.6,566.7 L1238.0,568.9 L1241.6,570.3 L1245.5,571.0 L1249.4,570.9 L1253.2,570.1 L1256.9,568.5 L1260.1,566.3 L1263.0,563.3 L1265.4,559.1 L1337.1,396.5 L1338.3,391.6 L1338.2,386.0 L1336.7,381.1 L1333.7,376.4 L1331.0,373.6 L1328.3,371.9 L1324.8,370.3 L1321.2,369.4 L1103.8,340.6 L1100.2,340.7 L1096.3,341.5 L1090.3,344.6 L1087.4,347.2 L1085.5,349.8 L1082.7,356.3ZM1033.4,744.1 L1029.1,748.5 L1026.4,753.9 L1025.5,759.8 L1026.5,766.4 L1097.5,944.0 L1099.4,947.4 L1102.0,950.3 L1105.1,952.7 L1108.6,954.5 L1112.3,955.5 L1116.2,955.8 L1120.1,955.3 L1123.8,954.1 L1127.2,952.1 L1130.4,949.4 L1133.1,945.7 L1134.7,941.9 L1224.4,666.0 L1225.2,662.4 L1225.3,658.5 L1224.6,654.6 L1223.3,651.0 L1220.4,646.8 L1216.0,643.0 L1210.7,640.6 L1204.9,639.9 L1096.0,652.1 L1089.4,654.0 L1086.6,655.7 L1083.8,658.1 L1081.7,660.6 L1079.9,663.9 L1078.7,667.7 L1076.2,680.0 L1072.9,690.7 L1068.6,701.2 L1061.9,713.3 L1055.4,722.5 L1049.7,729.3 L1041.9,737.1 L1033.4,744.1ZM1010.7,528.7 L1010.1,533.4 L1010.5,537.5 L1012.0,542.1 L1014.4,546.0 L1018.1,549.6 L1028.6,556.1 L1037.4,562.6 L1043.9,568.3 L1049.7,574.3 L1057.0,583.1 L1063.2,592.4 L1067.4,600.0 L1072.2,610.8 L1074.2,614.1 L1078.2,618.3 L1083.9,621.3 L1087.9,622.2 L1092.5,622.3 L1193.7,610.8 L1198.6,609.1 L1202.7,606.4 L1206.4,602.1 L1208.5,597.7 L1209.6,592.9 L1209.4,588.0 L1208.0,583.3 L1205.5,579.0 L1073.9,408.8 L1069.8,404.9 L1064.7,402.2 L1060.9,401.3 L1057.0,401.2 L1053.2,401.7 L1050.2,402.8 L1047.0,404.5 L1044.0,407.0 L1041.5,410.0 L1039.6,413.4 L1010.7,528.7ZM915.4,756.0 L903.3,750.2 L898.5,749.5 L893.7,750.0 L889.1,751.6 L884.5,754.7 L881.4,758.4 L879.2,762.7 L878.1,767.5 L878.0,974.1 L878.8,979.7 L881.3,985.0 L883.9,988.2 L887.8,991.2 L892.3,993.2 L897.1,994.0 L1055.6,994.0 L1061.5,993.1 L1066.7,990.6 L1071.7,985.9 L1074.6,980.1 L1075.6,974.1 L1074.5,967.6 L999.1,778.7 L997.2,775.1 L994.8,772.1 L992.1,769.8 L988.7,767.8 L985.8,766.8 L980.3,766.1 L970.0,766.9 L958.9,766.9 L950.5,766.1 L942.2,764.8 L933.7,762.8 L925.5,760.2 L915.4,756.0ZM878.0,534.0 L878.4,538.1 L879.5,541.8 L881.8,545.8 L884.3,548.7 L887.4,551.1 L891.1,552.9 L894.9,553.8 L898.7,554.1 L905.1,552.8 L920.4,545.4 L934.0,540.7 L947.7,537.8 L964.2,536.5 L968.0,535.7 L972.7,533.6 L977.1,529.9 L979.9,525.9 L981.5,521.5 L1009.1,410.8 L1009.4,405.1 L1008.3,400.4 L1006.2,396.0 L1002.8,392.1 L997.0,388.5 L990.3,387.0 L897.9,387.0 L894.0,387.4 L889.6,388.9 L886.0,391.0 L883.1,393.7 L879.5,399.5 L878.0,406.1 L878.0,534.0Z" fill="url(#pkg)" stroke="#606060" stroke-width="1.8"/>
<path d="M902.30,1038.60 A15.30,15.30 0 1,0 871.70,1038.60 A15.30,15.30 0 1,0 902.30,1038.60ZM979.67,1038.60 A15.30,15.30 0 1,0 949.07,1038.60 A15.30,15.30 0 1,0 979.67,1038.60ZM1057.04,1038.60 A15.30,15.30 0 1,0 1026.44,1038.60 A15.30,15.30 0 1,0 1057.04,1038.60ZM1134.41,1038.60 A15.30,15.30 0 1,0 1103.81,1038.60 A15.30,15.30 0 1,0 1134.41,1038.60ZM1211.78,1038.60 A15.30,15.30 0 1,0 1181.18,1038.60 A15.30,15.30 0 1,0 1211.78,1038.60ZM1289.15,1038.60 A15.30,15.30 0 1,0 1258.55,1038.60 A15.30,15.30 0 1,0 1289.15,1038.60ZM1366.52,1038.60 A15.30,15.30 0 1,0 1335.92,1038.60 A15.30,15.30 0 1,0 1366.52,1038.60ZM1443.89,1038.60 A15.30,15.30 0 1,0 1413.29,1038.60 A15.30,15.30 0 1,0 1443.89,1038.60ZM1521.26,1038.60 A15.30,15.30 0 1,0 1490.66,1038.60 A15.30,15.30 0 1,0 1521.26,1038.60ZM1598.63,1038.60 A15.30,15.30 0 1,0 1568.03,1038.60 A15.30,15.30 0 1,0 1598.63,1038.60ZM1676.00,1038.60 A15.30,15.30 0 1,0 1645.40,1038.60 A15.30,15.30 0 1,0 1676.00,1038.60ZM1753.37,1038.60 A15.30,15.30 0 1,0 1722.77,1038.60 A15.30,15.30 0 1,0 1753.37,1038.60ZM1830.74,1038.60 A15.30,15.30 0 1,0 1800.14,1038.60 A15.30,15.30 0 1,0 1830.74,1038.60ZM1908.11,1038.60 A15.30,15.30 0 1,0 1877.51,1038.60 A15.30,15.30 0 1,0 1908.11,1038.60ZM901.80,342.60 A15.30,15.30 0 1,0 871.20,342.60 A15.30,15.30 0 1,0 901.80,342.60ZM979.30,342.60 A15.30,15.30 0 1,0 948.70,342.60 A15.30,15.30 0 1,0 979.30,342.60ZM1056.90,342.60 A15.30,15.30 0 1,0 1026.30,342.60 A15.30,15.30 0 1,0 1056.90,342.60ZM1779.60,432.90 A15.30,15.30 0 1,0 1749.00,432.90 A15.30,15.30 0 1,0 1779.60,432.90ZM1807.10,699.40 A15.30,15.30 0 1,0 1776.50,699.40 A15.30,15.30 0 1,0 1807.10,699.40ZM1562.80,590.30 A15.30,15.30 0 1,0 1532.20,590.30 A15.30,15.30 0 1,0 1562.80,590.30ZM1051.20,651.80 A86.70,86.70 0 1,0 877.80,651.80 A86.70,86.70 0 1,0 1051.20,651.80ZM1827.00,574.30 A125.50,125.50 0 1,0 1576.00,574.30 A125.50,125.50 0 1,0 1827.00,574.30Z" fill="none" stroke="#2a2a2a" stroke-width="2"/>
<path d="M1985.48,1038.60 A15.30,15.30 0 1,0 1954.88,1038.60 A15.30,15.30 0 1,0 1985.48,1038.60ZM2062.85,1038.60 A15.30,15.30 0 1,0 2032.25,1038.60 A15.30,15.30 0 1,0 2062.85,1038.60ZM2140.22,1038.60 A15.30,15.30 0 1,0 2109.62,1038.60 A15.30,15.30 0 1,0 2140.22,1038.60ZM2217.59,1038.60 A15.30,15.30 0 1,0 2186.99,1038.60 A15.30,15.30 0 1,0 2217.59,1038.60ZM2294.96,1038.60 A15.30,15.30 0 1,0 2264.36,1038.60 A15.30,15.30 0 1,0 2294.96,1038.60ZM2372.33,1038.60 A15.30,15.30 0 1,0 2341.73,1038.60 A15.30,15.30 0 1,0 2372.33,1038.60Z" fill="none" stroke="#2a2a2a" stroke-width="2"/>
<path d="M1583,1023 L1583,1053 M1892,1023 L1892,1053" stroke="#222" stroke-width="2"/>
<path d="M840,961 L1940,961" stroke="#999" stroke-width="1.3" stroke-dasharray="22 6" fill="none" clip-path="url(#matclip)"/>
<path d="M810,265 L1119,265 L1119,420 L810,420 Z" stroke="#a8a8a8" stroke-width="1.4" fill="none" stroke-dasharray="24 5 3 5"/>
<circle cx="964.5" cy="651.8" r="155" stroke="#a8a8a8" stroke-width="1.4" fill="none" stroke-dasharray="24 5 3 5"/>
<circle cx="964.5" cy="651.8" r="146" stroke="#a8a8a8" stroke-width="1.4" fill="none" stroke-dasharray="18 6"/>
<path d="M967,506.4 L1701.5,516" stroke="#a8a8a8" stroke-width="1.4" fill="none" stroke-dasharray="24 5 3 5"/>
<path d="M997,793.5 L1715,631.3" stroke="#a8a8a8" stroke-width="1.4" fill="none" stroke-dasharray="24 5 3 5"/>
<circle cx="1701.5" cy="574.3" r="181" stroke="#a8a8a8" stroke-width="1.4" fill="none" stroke-dasharray="24 5 3 5"/>
<circle cx="1701.5" cy="574.3" r="58.5" stroke="#a8a8a8" stroke-width="1.4" fill="none" stroke-dasharray="18 6"/>
<circle cx="810" cy="265" r="2.6" fill="#999"/>
<circle cx="1119" cy="265" r="2.6" fill="#999"/>
<circle cx="810" cy="420" r="2.6" fill="#999"/>
<circle cx="1119" cy="420" r="2.6" fill="#999"/>
<circle cx="967" cy="506.4" r="2.6" fill="#999"/>
<circle cx="1701.5" cy="516" r="2.6" fill="#999"/>
<circle cx="997" cy="793.5" r="2.6" fill="#999"/>
<circle cx="1715" cy="631.3" r="2.6" fill="#999"/>
<circle cx="809" cy="961" r="2.6" fill="#999"/>
<circle cx="809" cy="1115" r="2.6" fill="#999"/>
<path d="M1041.6,342.6 L964.5,651.8 M1041.6,342.6 L1255.4,619.0 M1255.4,619.0 L1506.0,1038.6 M1375.0,347.8 L1255.4,619.0 M1255.4,619.0 L1119.1,1038.6 M964.5,651.8 L1255.4,619.0 M1255.4,619.0 L1547.5,590.3 M964.5,651.8 L1119.1,1038.6 M1375.0,347.8 L1547.5,590.3 M1701.5,574.3 L1506.0,1038.6 M1701.5,574.3 L1892.6,1038.6 M848,1009 L1928,1009 M848,372 L1034.3,372" stroke="#f7a81e" stroke-opacity="0.9" stroke-width="5.5" fill="none" stroke-linejoin="miter"/>
<circle cx="1738" cy="1115.5" r="6" fill="#fff" stroke="#222" stroke-width="2"/><circle cx="1738" cy="1115.5" r="2.2" fill="#222"/>
</svg><div style="position:absolute;left:0px;top:0px;width:2400px;height:51px;background:#f9f9f9"></div>
<div style="position:absolute;left:0px;top:0px;width:2400px;height:1px;background:#2e2e2e"></div>
<div style="position:absolute;left:0px;top:1px;width:2400px;height:1px;background:#aaa"></div>
<!--logo--><svg style="position:absolute;left:0px;top:5px;" width="40" height="45" viewBox="0 0 40 45"><path d="M17.90,10.00 L8.11,15.65 L8.11,26.95 L17.90,32.60 L27.69,26.95 L27.69,15.65Z" fill="none" stroke="#5cb85c" stroke-width="4.4" stroke-dasharray="20.00 2.6" stroke-dashoffset="-3.5" stroke-linejoin="miter"/><path d="M17.90,15.80 L13.14,18.55 L13.14,24.05 L17.90,26.80 L22.66,24.05 L22.66,18.55Z" fill="none" stroke="#555" stroke-width="2" stroke-dasharray="8.50 2.5" stroke-dashoffset="-2"/></svg>
<div class="t" style="left:39px;top:13.5px;font-size:21.8px;color:#747474;font-weight:normal;font-style:normal;">onshape</div>
<svg style="position:absolute;left:141px;top:18px;" width="21" height="19" viewBox="0 0 21 19"><rect x="0" y="0" width="21" height="3.6" fill="#333"/><rect x="0" y="7.6" width="21" height="3.6" fill="#333"/><rect x="0" y="15.2" width="21" height="3.6" fill="#333"/></svg>
<div class="t" style="left:177px;top:13.1px;font-size:27px;color:#2b2b2b;font-weight:bold;font-style:normal;letter-spacing:-0.25px">1E - Practice Exercise Solutions</div>
<div class="t" style="left:593px;top:19.9px;font-size:19px;color:#909090;font-weight:normal;font-style:normal;">Main</div>
<svg style="position:absolute;left:649px;top:20px;" width="17" height="17" viewBox="0 0 17 17"><path d="M7,10 L10,7 M5.5,8.5 L3,11 a2.8,2.8 0 0,0 4,4 L9.5,12.5 M8,5 L10.5,2.5 a2.8,2.8 0 0,1 4,4 L12,9" stroke="#222" stroke-width="2.2" fill="none" stroke-linecap="round"/></svg>
<svg style="position:absolute;left:678px;top:19px;" width="23" height="17" viewBox="0 0 23 17"><path d="M1,1.5 L8,1.5 L10,4 L22,4 L22,16 L1,16Z" fill="none" stroke="#999" stroke-width="1.5"/></svg>
<div class="t" style="left:707px;top:19.9px;font-size:19px;color:#8a8a8a;font-weight:normal;font-style:normal;">Stage 1</div>
<svg style="position:absolute;left:862px;top:16px;" width="20" height="20" viewBox="0 0 20 20"><path d="M9,1 L17.5,5 L9,9 L0.5,5Z" fill="#1a55b5"/><path d="M4,7 L4,11 Q9,14 14,11 L14,7 L9,9.5Z" fill="#1a55b5"/><path d="M1.5,5.5 L1.5,13" stroke="#1a55b5" stroke-width="1.5"/><circle cx="1.5" cy="14" r="1.5" fill="#1a55b5"/></svg>
<svg style="position:absolute;left:1899px;top:17px;" width="26" height="23" viewBox="0 0 26 23"><path d="M6,1.5 Q3,1.5 3,5 L3,9 Q3,11.5 1,11.5 Q3,11.5 3,14 L3,18 Q3,21.5 6,21.5 M20,1.5 Q23,1.5 23,5 L23,9 Q23,11.5 25,11.5 Q23,11.5 23,14 L23,18 Q23,21.5 20,21.5" stroke="#666" stroke-width="2.2" fill="none"/><path d="M8,11 L12,15 L18,7" stroke="#666" stroke-width="2.4" fill="none"/></svg>
<svg style="position:absolute;left:1941px;top:17px;" width="24" height="23" viewBox="0 0 24 23"><path d="M12,2 Q5,2 5,10 L5,15 L2,19 L22,19 L19,15 L19,10 Q19,2 12,2Z" fill="#666"/><circle cx="12" cy="21" r="2.5" fill="#666"/></svg>
<div style="position:absolute;left:1953px;top:9px;width:20px;height:20px;background:#1a56b8;border-radius:3px"></div>
<div class="t" style="left:1963px;transform:translateX(-50%);top:13.0px;font-size:13px;color:#fff;font-weight:bold;font-style:normal;letter-spacing:-0.5px">9+</div>
<svg style="position:absolute;left:1982px;top:17px;" width="21" height="23" viewBox="0 0 21 23"><rect x="1" y="1" width="19" height="21" rx="2" fill="none" stroke="#666" stroke-width="2"/><path d="M4,6 L6,8 L9,4 M4,12 L6,14 L9,10 M4,18 L6,20 L9,16" stroke="#666" stroke-width="1.4" fill="none"/><path d="M11,7 L17,7 M11,13 L17,13 M11,19 L17,19" stroke="#666" stroke-width="2"/></svg>
<svg style="position:absolute;left:2020px;top:17px;" width="24" height="23" viewBox="0 0 24 23"><rect x="1" y="3" width="8" height="8" fill="none" stroke="#666" stroke-width="2"/><rect x="1" y="14" width="8" height="8" fill="none" stroke="#666" stroke-width="2"/><rect x="13" y="14" width="8" height="8" fill="none" stroke="#666" stroke-width="2"/><path d="M17,1 L17,10 M12.5,5.5 L21.5,5.5" stroke="#666" stroke-width="2"/></svg>
<svg style="position:absolute;left:2061px;top:17px;" width="23" height="23" viewBox="0 0 23 23"><path d="M11,1 Q21,1 21,10 L22,13 L20,14 L20,18 L16,18 L16,22 L6,22 L6,17 Q1,14 1,10 Q1,1 11,1Z" fill="#666"/><circle cx="10" cy="9" r="3" fill="none" stroke="#f9f9f9" stroke-width="1.6"/><circle cx="15" cy="13" r="2" fill="none" stroke="#f9f9f9" stroke-width="1.4"/></svg>
<div style="position:absolute;left:2098px;top:4px;width:73px;height:42px;background:#1651b5;border-radius:6px"></div>
<div class="t" style="left:2134.5px;transform:translateX(-50%);top:17.2px;font-size:17.5px;color:#fff;font-weight:bold;font-style:normal;font-weight:600">Share</div>
<svg style="position:absolute;left:2184px;top:17px;" width="24" height="24" viewBox="0 0 24 24"><circle cx="12" cy="12" r="11.5" fill="#555"/><text x="12" y="18.5" text-anchor="middle" font-family="Liberation Sans" font-weight="bold" font-size="18" fill="#f9f9f9">?</text></svg>
<svg style="position:absolute;left:2217px;top:24px;" width="11" height="6" viewBox="0 0 11 6"><path d="M0,0 L11,0 L5.5,6Z" fill="#333"/></svg>
<svg style="position:absolute;left:2242px;top:14px;" width="30" height="30" viewBox="0 0 30 30"><rect width="30" height="30" fill="#8a7a5a"/><rect y="18" width="30" height="12" fill="#7a8a4a"/><ellipse cx="17" cy="15" rx="9" ry="10" fill="#c9b9a0"/><ellipse cx="14" cy="10" rx="8" ry="4" fill="#6a5a4a"/><circle cx="12" cy="10" r="2.5" fill="#ddd"/><circle cx="18" cy="10" r="2.5" fill="#ddd"/></svg>
<div class="t" style="left:2280px;top:18.6px;font-size:17px;color:#333;font-weight:normal;font-style:normal;">Jonathan Mi</div>
<svg style="position:absolute;left:2383px;top:24px;" width="10" height="5.5" viewBox="0 0 10 5.5"><path d="M0,0 L10,0 L5,5.5Z" fill="#333"/></svg>
<div style="position:absolute;left:0px;top:51px;width:50px;height:1236px;background:#f9f9f9;border-right:1px solid #d0d0d0"></div>
<svg style="position:absolute;left:12px;top:61px;" width="26" height="24" viewBox="0 0 26 24"><circle cx="5" cy="5" r="4" fill="none" stroke="#333" stroke-width="2"/><path d="M5,9 L5,20" stroke="#333" stroke-width="2.2"/><circle cx="5" cy="20" r="2.6" fill="#333"/><path d="M5,17 Q10,13 13,11" stroke="#333" stroke-width="2" fill="none"/><circle cx="13" cy="11" r="2.3" fill="#333"/><path d="M13,2 L25,2 M17,8 L25,8 M17,14 L25,14 M13,20 L25,20" stroke="#333" stroke-width="2.4"/></svg>
<div style="position:absolute;left:50px;top:51px;width:1px;height:45px;background:#d0d0d0"></div>
<svg style="position:absolute;left:14px;top:106px;" width="24" height="24" viewBox="0 0 24 24"><path d="M5,1 L5,4 M5,18 L5,23" stroke="#333" stroke-width="2.2" stroke-dasharray="2.2 1.6"/><circle cx="5" cy="11" r="4" fill="#333"/><path d="M17,10 L17,22 M11,16 L23,16" stroke="#1a56b8" stroke-width="3"/></svg>
<svg style="position:absolute;left:12px;top:150px;" width="26" height="24" viewBox="0 0 26 24"><ellipse cx="13" cy="9.5" rx="12" ry="8.5" fill="#333"/><path d="M2,24 L8,15 L13,17Z" fill="#333"/></svg>
<svg style="position:absolute;left:12px;top:193px;" width="26" height="25" viewBox="0 0 26 25"><circle cx="15" cy="14" r="9" fill="none" stroke="#333" stroke-width="2.6"/><path d="M11,2.5 L19,2.5 M15,2.5 L15,5" stroke="#333" stroke-width="2.2"/><path d="M15,14 L19,10" stroke="#333" stroke-width="2.2"/><path d="M1,11 L5,11 M0,15 L5,15 M2,19 L6,19" stroke="#333" stroke-width="1.8"/></svg>
<div style="position:absolute;left:0px;top:227px;width:49px;height:1px;background:#d8d8d8"></div>
<svg style="position:absolute;left:14px;top:239px;" width="20" height="21" viewBox="0 0 20 21"><rect x="1" y="1" width="18" height="19" rx="2" fill="none" stroke="#333" stroke-width="2"/><path d="M4,6 L6,8 L8.5,4.5 M4,11 L6,13 L8.5,9.5 M4,16 L6,18 L8.5,14.5" stroke="#333" stroke-width="1.3" fill="none"/><path d="M10,7 L16,7 M10,12 L16,12 M10,17 L16,17" stroke="#333" stroke-width="2"/></svg>
<svg style="position:absolute;left:13px;top:1261px;" width="23" height="20" viewBox="0 0 23 20"><path d="M1,3 L22,3 L22,13 L15,13 M1,3 L1,13 L7,13" fill="#333"/><rect x="1" y="3" width="21" height="10" fill="#333"/><circle cx="13" cy="11" r="5.5" fill="#f9f9f9" stroke="#333" stroke-width="2.2"/><path d="M17,15 L21,19" stroke="#333" stroke-width="2.6"/></svg>
<div style="position:absolute;left:51px;top:96px;width:399px;height:1px;background:#d6d6d6"></div>
<svg style="position:absolute;left:59.0px;top:61.0px;" width="24" height="24" viewBox="0 0 24 24"><path d="M9,4 L2,10 L9,16 L9,12 Q17,12 19,20 Q20,8 9,8Z" fill="#9a9a9a"/></svg>
<svg style="position:absolute;left:103.0px;top:61.0px;" width="24" height="24" viewBox="0 0 24 24"><path d="M15,4 L22,10 L15,16 L15,12 Q7,12 5,20 Q4,8 15,8Z" fill="#9a9a9a"/></svg>
<div style="position:absolute;left:138px;top:57px;width:2.5px;height:33px;background:#d9d9d9"></div>
<svg style="position:absolute;left:151px;top:62px;" width="23" height="24" viewBox="0 0 23 24"><path d="M4,18 L16,3 L20,6.5 L8,21 L3,22Z" fill="none" stroke="#333" stroke-width="1.6"/><path d="M1,23 L23,23" stroke="#3a70d0" stroke-width="1.6"/></svg>
<div class="t" style="left:180px;top:66.4px;font-size:17.2px;color:#333;font-weight:normal;font-style:normal;">Sketch</div>
<div style="position:absolute;left:248.5px;top:57px;width:2.5px;height:33px;background:#d9d9d9"></div>
<svg style="position:absolute;left:261.0px;top:61.0px;" width="24" height="24" viewBox="0 0 24 24"><path d="M1,5 L5,1 L19,1 L23,5 L23,23 L5,23 L1,19Z" fill="#fff" stroke="#333" stroke-width="1.3"/><path d="M5,23 L5,5 L23,5 M1,5 L5,5" fill="none" stroke="#333" stroke-width="1"/><path d="M9,13 L11,11 L21,11 L21,23 L9,23Z" fill="#9a9a9a" stroke="#333" stroke-width="1.1"/><path d="M11,23 L11,13 L21,13 M9,13 L11,13" fill="none" stroke="#333" stroke-width="0.8"/></svg>
<svg style="position:absolute;left:305.0px;top:61.0px;" width="24" height="24" viewBox="0 0 24 24"><path d="M18,4 Q12,-1 6,3 Q0,8 2,15 Q5,23 14,23 Q19,22 20,19 L14,15 Q11,12 14,9Z" fill="#9a9a9a" stroke="#333" stroke-width="1.2"/><ellipse cx="16.5" cy="7" rx="2.2" ry="3.5" fill="#fff" stroke="#333" stroke-width="0.9" transform="rotate(40 16.5 7)"/><ellipse cx="16.5" cy="18" rx="2.2" ry="3.5" fill="#fff" stroke="#333" stroke-width="0.9" transform="rotate(-40 16.5 18)"/><path d="M13,12.5 L23,12.5" stroke="#333" stroke-width="1" stroke-dasharray="2 1.5"/></svg>
<svg style="position:absolute;left:347.0px;top:61.0px;" width="24" height="24" viewBox="0 0 24 24"><path d="M2,21 Q1,13 8,10 Q12,9 16,7 L17,3 Q21,2 23,4 L22,9 Q20,14 13,15 Q9,16 9,20 Q8,24 4,23Z" fill="#9a9a9a" stroke="#333" stroke-width="1.2"/><ellipse cx="20" cy="4" rx="3" ry="2.2" fill="#fff" stroke="#333" stroke-width="1"/></svg>
<svg style="position:absolute;left:388.5px;top:61.0px;" width="24" height="24" viewBox="0 0 24 24"><path d="M7,3 L17,3 L19,16 L22,20 L12,23 L2,20 L5,16Z" fill="#9a9a9a" stroke="#333" stroke-width="1.2"/><ellipse cx="12" cy="3.5" rx="5" ry="2" fill="#fff" stroke="#333" stroke-width="1"/></svg>
<svg style="position:absolute;left:430.5px;top:61.0px;" width="24" height="24" viewBox="0 0 24 24"><path d="M1,5 L7,2 Q13,4 18,1 L23,5 L23,19 Q17,17 11,21 L7,23 L1,19Z" fill="#9a9a9a" stroke="#333" stroke-width="1.2"/><path d="M1,5 L7,8 Q13,6 23,5 M7,8 L7,23" fill="none" stroke="#333" stroke-width="1"/><path d="M14,7 L14,17 M10,13 L14,17 L18,13" stroke="#222" stroke-width="2.2" fill="none"/></svg>
<svg style="position:absolute;left:468px;top:69px;" width="12" height="8" viewBox="0 0 12 8"><path d="M1,1.5 L6,6.5 L11,1.5" stroke="#333" stroke-width="2" fill="none"/></svg>
<div style="position:absolute;left:488.5px;top:57px;width:2.5px;height:33px;background:#d9d9d9"></div>
<svg style="position:absolute;left:501.0px;top:61.0px;" width="24" height="24" viewBox="0 0 24 24"><path d="M2,23 L2,10 Q2,2 10,2 L20,2 L23,5 L23,23Z" fill="#fff" stroke="#333" stroke-width="1.3"/><path d="M2,10 Q3,5 10,5 L23,5" fill="none" stroke="#333" stroke-width="1"/></svg>
<svg style="position:absolute;left:538px;top:69px;" width="12" height="8" viewBox="0 0 12 8"><path d="M1,1.5 L6,6.5 L11,1.5" stroke="#333" stroke-width="2" fill="none"/></svg>
<svg style="position:absolute;left:566.5px;top:61.0px;" width="24" height="24" viewBox="0 0 24 24"><path d="M2,23 L2,8 L8,2 L20,2 L23,5 L23,23Z" fill="#fff" stroke="#333" stroke-width="1.3"/><path d="M2,8 L7,5 L23,5" fill="none" stroke="#333" stroke-width="1"/></svg>
<svg style="position:absolute;left:608.5px;top:61.0px;" width="24" height="24" viewBox="0 0 24 24"><path d="M2,23 L8,2 L20,2 L23,5 L23,23Z" fill="#9a9a9a" stroke="#333" stroke-width="1.3"/><path d="M8,2 L11,5 L23,5 M11,5 L9,23" fill="none" stroke="#333" stroke-width="1"/></svg>
<svg style="position:absolute;left:646px;top:69px;" width="12" height="8" viewBox="0 0 12 8"><path d="M1,1.5 L6,6.5 L11,1.5" stroke="#333" stroke-width="2" fill="none"/></svg>
<svg style="position:absolute;left:673.5px;top:61.0px;" width="24" height="24" viewBox="0 0 24 24"><path d="M1,17 L16,2 L20,4 L22,22 L4,22 L1,19Z" fill="#fff" stroke="#333" stroke-width="1.3"/><path d="M6,18 L17,7 L18,19Z" fill="#9a9a9a" stroke="#333" stroke-width="1"/></svg>
<svg style="position:absolute;left:715.5px;top:61.0px;" width="24" height="24" viewBox="0 0 24 24"><path d="M2,5 L5,2 L21,2 L23,4 L23,23 L5,23 L2,20Z" fill="#fff" stroke="#333" stroke-width="1.3"/><rect x="7" y="5" width="13" height="15" fill="#9a9a9a" stroke="#333" stroke-width="1"/><rect x="10" y="7" width="8" height="11" fill="#fff" stroke="#333" stroke-width="0.8"/></svg>
<svg style="position:absolute;left:758.5px;top:61.0px;" width="24" height="24" viewBox="0 0 24 24"><path d="M2,5 L5,2 L21,2 L23,4 L23,23 L5,23 L2,20Z" fill="#fff" stroke="#333" stroke-width="1.3"/><circle cx="14" cy="13" r="6.5" fill="#9a9a9a" stroke="#333" stroke-width="1"/><circle cx="14" cy="13" r="3.5" fill="#fff" stroke="#333" stroke-width="1"/></svg>
<svg style="position:absolute;left:801.0px;top:61.0px;" width="24" height="24" viewBox="0 0 24 24"><path d="M5,4 Q12,0 19,4 L19,20 Q12,24 5,20Z" fill="#9a9a9a" stroke="#333" stroke-width="1.2"/><path d="M5,4 Q12,8 19,4 M5,9 Q12,13 19,9 M5,14 Q12,18 19,14" fill="none" stroke="#fff" stroke-width="1.1"/><ellipse cx="12" cy="4" rx="7" ry="2.5" fill="#fff" stroke="#333" stroke-width="1"/></svg>
<div style="position:absolute;left:836px;top:57px;width:2.5px;height:33px;background:#d9d9d9"></div>
<svg style="position:absolute;left:848.5px;top:61.0px;" width="24" height="24" viewBox="0 0 24 24"><rect x="1" y="1" width="10" height="10" fill="#9a9a9a" stroke="#333" stroke-width="1.2"/><rect x="13" y="1" width="10" height="10" fill="#fff" stroke="#333" stroke-width="1.2"/><rect x="1" y="13" width="10" height="10" fill="#9a9a9a" stroke="#333" stroke-width="1.2"/><rect x="13" y="13" width="10" height="10" fill="#9a9a9a" stroke="#333" stroke-width="1.2"/></svg>
<svg style="position:absolute;left:886px;top:69px;" width="12" height="8" viewBox="0 0 12 8"><path d="M1,1.5 L6,6.5 L11,1.5" stroke="#333" stroke-width="2" fill="none"/></svg>
<svg style="position:absolute;left:913.0px;top:61.0px;" width="24" height="24" viewBox="0 0 24 24"><path d="M1,4 L5,1 L10,3 L10,23 L4,23 L1,20Z" fill="#fff" stroke="#333" stroke-width="1.2"/><path d="M14,3 L19,1 L23,4 L23,20 L20,23 L14,23Z" fill="#9a9a9a" stroke="#333" stroke-width="1.2"/><path d="M5,1 L5,23 M19,1 L19,23" stroke="#333" stroke-width="1"/></svg>
<div style="position:absolute;left:948px;top:57px;width:2.5px;height:33px;background:#d9d9d9"></div>
<svg style="position:absolute;left:961.5px;top:61.0px;" width="24" height="24" viewBox="0 0 24 24"><circle cx="9" cy="12" r="7.5" fill="none" stroke="#333" stroke-width="1.8"/><circle cx="15" cy="12" r="7.5" fill="none" stroke="#333" stroke-width="1.8"/></svg>
<svg style="position:absolute;left:1003.5px;top:61.0px;" width="24" height="24" viewBox="0 0 24 24"><path d="M2,6 L6,2 L22,2 L22,18 L18,22 L2,22Z" fill="#fff" stroke="#333" stroke-width="1.3"/><path d="M2,6 L18,6 L22,2 M18,6 L18,22" fill="none" stroke="#333" stroke-width="1"/><path d="M2,15 Q8,11 12,15 Q16,19 22,14" fill="none" stroke="#777" stroke-width="1.5"/></svg>
<svg style="position:absolute;left:1045.8px;top:61.0px;" width="24" height="24" viewBox="0 0 24 24"><rect x="1" y="12" width="11" height="11" fill="#fff" stroke="#333" stroke-width="1.2"/><rect x="12" y="2" width="9" height="9" transform="rotate(35 16 6)" fill="#9a9a9a" stroke="#333" stroke-width="1.2"/><path d="M4,9 Q5,3 10,2 M20,15 Q19,21 14,22" fill="none" stroke="#333" stroke-width="1.5"/></svg>
<svg style="position:absolute;left:1082.7px;top:69px;" width="12" height="8" viewBox="0 0 12 8"><path d="M1,1.5 L6,6.5 L11,1.5" stroke="#333" stroke-width="2" fill="none"/></svg>
<svg style="position:absolute;left:1111.0px;top:61.0px;" width="24" height="24" viewBox="0 0 24 24"><path d="M2,5 L5,2 L18,2 L20,4 L20,18 L5,18 L2,15Z" fill="#aaa" stroke="#555" stroke-width="1.2"/><circle cx="17" cy="18" r="6" fill="#444"/><path d="M14.5,15.5 L19.5,20.5 M19.5,15.5 L14.5,20.5" stroke="#fff" stroke-width="1.6"/></svg>
<div style="position:absolute;left:1146px;top:57px;width:2.5px;height:33px;background:#d9d9d9"></div>
<svg style="position:absolute;left:1158.7px;top:61.0px;" width="24" height="24" viewBox="0 0 24 24"><path d="M2,14 Q4,4 12,3 Q18,2 21,6 L21,10 Q14,10 10,17 L6,22Z" fill="#9a9a9a" stroke="#555" stroke-width="1"/><path d="M10,20 Q12,13 19,12 L17,9 L23,12 L19,17 L18,14 Q14,15 12,21Z" fill="#fff" stroke="#333" stroke-width="1.2"/></svg>
<svg style="position:absolute;left:1202.0px;top:61.0px;" width="24" height="24" viewBox="0 0 24 24"><path d="M1,14 Q4,4 12,3 Q18,2 22,6 L22,14 Q14,12 10,17 L6,22Z" fill="#9a9a9a"/><circle cx="16" cy="18" r="6" fill="#444"/><path d="M13.5,15.5 L18.5,20.5 M18.5,15.5 L13.5,20.5" stroke="#fff" stroke-width="1.6"/></svg>
<svg style="position:absolute;left:1242.6px;top:61.0px;" width="24" height="24" viewBox="0 0 24 24"><path d="M1,12 L7,9 L23,9 L23,22 L1,22Z" fill="#fff" stroke="#333" stroke-width="1.3"/><path d="M12,15 L12,4 M8,7 L12,2 L16,7" stroke="#222" stroke-width="2.2" fill="none"/></svg>
<svg style="position:absolute;left:1285.3px;top:61.0px;" width="24" height="24" viewBox="0 0 24 24"><path d="M1,14 L7,11 L23,11 L23,22 L1,22Z" fill="#fff" stroke="#333" stroke-width="1.3"/><path d="M1,8 Q8,2 14,6 Q19,2 23,5 L23,9 Q18,8 14,10 Q8,6 1,11Z" fill="#9a9a9a"/></svg>
<div style="position:absolute;left:1321px;top:57px;width:2.5px;height:33px;background:#d9d9d9"></div>
<svg style="position:absolute;left:1334.0px;top:61.0px;" width="24" height="24" viewBox="0 0 24 24"><path d="M2,1 L22,4 L22,23 L2,20Z" fill="#ddd" stroke="#333" stroke-width="1.3"/><path d="M2,11 L12,12 L12,22" fill="none" stroke="#333" stroke-width="1.2"/></svg>
<svg style="position:absolute;left:1376.4px;top:61.0px;" width="24" height="24" viewBox="0 0 24 24"><path d="M6,4 L14,2 L13,21 L5,23Z" fill="#fff" stroke="#333" stroke-width="1.2"/><path d="M14,2 Q20,6 18,12 Q16,18 19,23 L13,21Z" fill="#9a9a9a"/></svg>
<svg style="position:absolute;left:1413px;top:69px;" width="12" height="8" viewBox="0 0 12 8"><path d="M1,1.5 L6,6.5 L11,1.5" stroke="#333" stroke-width="2" fill="none"/></svg>
<svg style="position:absolute;left:1441.0px;top:61.0px;" width="24" height="24" viewBox="0 0 24 24"><ellipse cx="12" cy="4" rx="10" ry="3" fill="none" stroke="#333" stroke-width="2"/><ellipse cx="12" cy="10" rx="10" ry="3" fill="none" stroke="#333" stroke-width="2"/><ellipse cx="12" cy="16" rx="10" ry="3" fill="none" stroke="#333" stroke-width="2"/><ellipse cx="12" cy="21" rx="10" ry="2.5" fill="none" stroke="#333" stroke-width="2"/></svg>
<svg style="position:absolute;left:1477.4px;top:69px;" width="12" height="8" viewBox="0 0 12 8"><path d="M1,1.5 L6,6.5 L11,1.5" stroke="#333" stroke-width="2" fill="none"/></svg>
<svg style="position:absolute;left:1507.0px;top:61.0px;" width="24" height="24" viewBox="0 0 24 24"><circle cx="12" cy="12" r="10.5" fill="none" stroke="#333" stroke-width="1.8"/><path d="M12,4 L12,12 L19,12" stroke="#333" stroke-width="1.8" fill="none"/></svg>
<svg style="position:absolute;left:1548.6px;top:61.0px;" width="24" height="24" viewBox="0 0 24 24"><path d="M3,9 L9,9 L9,3 L21,3 L21,23 L3,23Z" fill="#fff" stroke="#333" stroke-width="1.3"/><path d="M4,1 Q12,2 13,10 L10,8 M13,10 L15,7" stroke="#333" stroke-width="1.8" fill="none"/></svg>
<div class="t" style="left:1589px;top:64.2px;font-size:21px;color:#333;font-weight:bold;font-style:normal;font-family:"Liberation Serif"">(<i>x</i>)</div>
<svg style="position:absolute;left:1633.0px;top:61.0px;" width="24" height="24" viewBox="0 0 24 24"><path d="M12,1 L17,4 L17,10 L12,13 L7,10 L7,4Z M7,10 L2,13 L2,19 L7,22 L12,19 L12,13 M17,10 L22,13 L22,19 L17,22 L12,19" fill="#fff" stroke="#333" stroke-width="1.2"/></svg>
<div style="position:absolute;left:1668.5px;top:57px;width:2.5px;height:33px;background:#d9d9d9"></div>
<svg style="position:absolute;left:1681.0px;top:61.0px;" width="24" height="24" viewBox="0 0 24 24"><path d="M1,7 L9,3 L17,7 L17,18 L9,22 L1,18Z" fill="#fff" stroke="#333" stroke-width="1.3"/><path d="M1,7 L9,11 L17,7 M9,11 L9,22" fill="none" stroke="#333" stroke-width="1.1"/><path d="M9,11 L17,7 L17,18 L9,22Z" fill="#9a9a9a"/><circle cx="17" cy="6" r="5.5" fill="#7aa7e0"/><path d="M17,4 L17,8.5" stroke="#fff" stroke-width="1.6"/><circle cx="17" cy="2.5" r="0.9" fill="#fff"/></svg>
<svg style="position:absolute;left:1718px;top:69px;" width="12" height="8" viewBox="0 0 12 8"><path d="M1,1.5 L6,6.5 L11,1.5" stroke="#333" stroke-width="2" fill="none"/></svg>
<div style="position:absolute;left:1738px;top:57px;width:2.5px;height:33px;background:#d9d9d9"></div>
<svg style="position:absolute;left:1750.5px;top:61.0px;" width="24" height="24" viewBox="0 0 24 24"><path d="M5,2 Q2,2 2,6 L2,10 L0.5,12 L2,14 L2,19 Q2,23 5,23 M19,2 Q22,2 22,6 L22,10 L23.5,12 L22,14 L22,19 Q22,23 19,23" stroke="#333" stroke-width="1.4" fill="none"/><path d="M6,10 L12,7 L18,10 L18,16 L12,19 L6,16Z M6,10 L12,13 L18,10 M12,13 L12,19" fill="#fff" stroke="#333" stroke-width="1.2"/><path d="M12,1 L12,7" stroke="#333" stroke-width="1.5"/><circle cx="12" cy="4" r="2" fill="#333"/></svg>
<svg style="position:absolute;left:1780.3px;top:69px;" width="12" height="8" viewBox="0 0 12 8"><path d="M1,1.5 L6,6.5 L11,1.5" stroke="#333" stroke-width="2" fill="none"/></svg>
<div style="position:absolute;left:1821px;top:53px;width:221px;height:41px;background:#eeeeee;border-radius:5px"></div>
<div class="t" style="left:1833.5px;top:65.6px;font-size:17px;color:#444;font-weight:normal;font-style:normal;">Search tools...</div>
<div style="position:absolute;left:1946.6px;top:64.6px;width:27px;height:21.5px;border:1px solid #a9a9a9;border-radius:3px;background:#f6f6f6"></div>
<div class="t" style="left:1960.1px;transform:translateX(-50%);top:67.7px;font-size:14.5px;color:#333;font-weight:normal;font-style:normal;">ctrl</div>
<div style="position:absolute;left:1974.3px;top:64.6px;width:33px;height:21.5px;border:1px solid #a9a9a9;border-radius:3px;background:#f6f6f6"></div>
<div class="t" style="left:1990.8px;transform:translateX(-50%);top:67.7px;font-size:14.5px;color:#333;font-weight:normal;font-style:normal;">shift</div>
<div style="position:absolute;left:2008.6px;top:64.6px;width:20px;height:21.5px;border:1px solid #a9a9a9;border-radius:3px;background:#f6f6f6"></div>
<div class="t" style="left:2018.6px;transform:translateX(-50%);top:67.7px;font-size:14.5px;color:#333;font-weight:normal;font-style:normal;">p</div>
<div style="position:absolute;left:50px;top:97px;width:401px;height:1153px;background:#fff;border-right:1px solid #d3d3d3"></div>
<svg style="position:absolute;left:63px;top:115px;" width="21" height="21" viewBox="0 0 21 21"><path d="M1,2 L20,2 L12.5,11 L12.5,19 L8.5,17 L8.5,11Z" fill="none" stroke="#333" stroke-width="1.5" stroke-linejoin="round"/></svg>
<div style="position:absolute;left:99px;top:106px;width:341px;height:37px;border:1px solid #b9b9b9;border-radius:4px;background:#fff"></div>
<div class="t" style="left:107px;top:117.5px;font-size:16px;color:#8a8a8a;font-weight:normal;font-style:italic;">Filter by name or type</div>
<div class="t" style="left:55px;top:154.5px;font-size:16px;color:#2b2b2b;font-weight:bold;font-style:normal;">Features (21)</div>
<svg style="position:absolute;left:363px;top:154px;" width="25" height="20" viewBox="0 0 25 20"><path d="M1,2 L9,2 L11,5 L23,5 L23,18 L1,18Z" fill="none" stroke="#999" stroke-width="1.4"/><path d="M7,9 L7,17 M3,13 L11,13" stroke="#4a86d8" stroke-width="2"/></svg>
<svg style="position:absolute;left:401px;top:151px;" width="23" height="25" viewBox="0 0 23 25"><circle cx="11.5" cy="14" r="9" fill="none" stroke="#333" stroke-width="2.4"/><path d="M8,2 L15,2 M11.5,2 L11.5,5" stroke="#333" stroke-width="2.2"/><path d="M11.5,14 L7.5,9.5" stroke="#333" stroke-width="2"/></svg>
<div style="position:absolute;left:424px;top:182px;width:20px;height:741px;background:#f1f1f1"></div>
<div style="position:absolute;left:425px;top:302px;width:16px;height:603px;background:#c1c1c1"></div>
<svg style="position:absolute;left:428px;top:188px;" width="11" height="7" viewBox="0 0 11 7"><path d="M0,7 L11,7 L5.5,0Z" fill="#505050"/></svg>
<svg style="position:absolute;left:428px;top:915px;" width="11" height="7" viewBox="0 0 11 7"><path d="M0,0 L11,0 L5.5,7Z" fill="#505050"/></svg>
<div style="position:absolute;left:56px;top:913px;width:361px;height:9px;background:#b0b0b0"></div>
<div style="position:absolute;left:50px;top:931px;width:394px;height:1px;background:#d8d8d8"></div>
<div style="position:absolute;left:61px;top:181px;width:2px;height:36px;background:#cfcfcf"></div>
<div style="position:absolute;left:56px;top:216px;width:12px;height:1.5px;background:#cfcfcf"></div>
<div style="position:absolute;left:61px;top:317px;width:2px;height:95px;background:#cfcfcf"></div>
<div style="position:absolute;left:56px;top:411px;width:12px;height:1.5px;background:#cfcfcf"></div>
<div style="position:absolute;left:61px;top:446px;width:2px;height:194px;background:#cfcfcf"></div>
<div style="position:absolute;left:56px;top:639px;width:12px;height:1.5px;background:#cfcfcf"></div>
<div style="position:absolute;left:61px;top:673px;width:2px;height:64px;background:#cfcfcf"></div>
<div style="position:absolute;left:56px;top:736px;width:12px;height:1.5px;background:#cfcfcf"></div>
<div style="position:absolute;left:61px;top:770px;width:2px;height:64px;background:#cfcfcf"></div>
<div style="position:absolute;left:56px;top:833px;width:12px;height:1.5px;background:#cfcfcf"></div>
<div style="position:absolute;left:50px;top:415px;width:373px;height:30px;background:#eaeef3"></div>
<div style="position:absolute;left:50px;top:444px;width:373px;height:1.5px;background:#8cc4ee"></div>
<div style="position:absolute;left:63px;top:512px;width:360px;height:29px;background:#eaeef3"></div>
<div style="position:absolute;left:50px;top:541px;width:373px;height:1.5px;background:#8cc4ee"></div>
<div style="position:absolute;left:50px;top:545px;width:373px;height:30px;background:#b3dbf4"></div>
<div style="position:absolute;left:61px;top:545px;width:2px;height:30px;background:#a9c3d6"></div>
<svg style="position:absolute;left:80px;top:190px;" width="22" height="23" viewBox="0 0 22 23"><path d="M2.3,2.1 L19.7,5.4 L19.7,20.8 L2.3,17.7Z" fill="#ececec" stroke="#a5a5a5" stroke-width="1.2"/><path d="M11.2,4.4 L11.2,12.2 L19.5,13.7" fill="none" stroke="#a5a5a5" stroke-width="1.2"/></svg>
<div class="t" style="left:107px;top:193.5px;font-size:16.3px;color:#a9a9a9;font-weight:normal;font-style:normal;">Right</div>
<svg style="position:absolute;left:56px;top:225px;" width="14" height="18" viewBox="0 0 14 18"><path d="M3,2 L10,9 L3,16" stroke="#555" stroke-width="2.4" fill="none"/></svg>
<svg style="position:absolute;left:82px;top:223px;" width="21" height="21" viewBox="0 0 21 21"><path d="M10.5,1 L19.5,5.5 L19.5,15.5 L10.5,20 L1.5,15.5 L1.5,5.5Z M1.5,5.5 L10.5,10 L19.5,5.5 M10.5,10 L10.5,20" fill="#f4f4f4" stroke="#b5b5b5" stroke-width="1.3"/></svg>
<div class="t" style="left:107px;top:226.0px;font-size:16.3px;color:#a9a9a9;font-weight:normal;font-style:normal;">Origin Cube</div>
<svg style="position:absolute;left:368px;top:221px;" width="9" height="26" viewBox="0 0 9 26"><path d="M4.5,0 L4.5,7 M4.5,19 L4.5,26" stroke="#2a2a2a" stroke-width="2.4" stroke-dasharray="2.2 1.6"/><circle cx="4.5" cy="13" r="4.2" fill="#2a2a2a"/></svg>
<svg style="position:absolute;left:57px;top:256.5px;" width="21" height="21" viewBox="0 0 21 21"><path d="M4,15 L14,3 L18,6.5 L8,18.5 L3.5,19.5Z" fill="none" stroke="#444" stroke-width="1.3" stroke-linejoin="round"/><path d="M1,20.3 L20,20.3" stroke="#6b9be0" stroke-width="1.3"/></svg>
<div class="t" style="left:82px;top:258.5px;font-size:16.3px;color:#333;font-weight:normal;font-style:normal;">Layout Sketch</div>
<svg style="position:absolute;left:55px;top:294px;" width="15" height="10" viewBox="0 0 15 10"><path d="M1.5,1.5 L7.5,7.5 L13.5,1.5" stroke="#555" stroke-width="2.4" fill="none"/></svg>
<svg style="position:absolute;left:82px;top:290px;" width="20" height="17" viewBox="0 0 20 17"><path d="M1,1.5 L7.5,1.5 L9.5,4 L19,4 L19,16 L1,16Z" fill="#fff" stroke="#444" stroke-width="1.3"/></svg>
<div class="t" style="left:108px;top:291.0px;font-size:16.3px;color:#333;font-weight:normal;font-style:normal;">Tube (3)</div>
<svg style="position:absolute;left:82px;top:321.5px;" width="21" height="21" viewBox="0 0 21 21"><path d="M4,15 L14,3 L18,6.5 L8,18.5 L3.5,19.5Z" fill="none" stroke="#aaa" stroke-width="1.3" stroke-linejoin="round"/><path d="M1,20.3 L20,20.3" stroke="#6b9be0" stroke-width="1.3"/></svg>
<div class="t" style="left:107px;top:323.5px;font-size:16.3px;color:#a9a9a9;font-weight:normal;font-style:normal;">Tube Sketch</div>
<svg style="position:absolute;left:82px;top:354px;opacity:1" width="20" height="20" viewBox="0 0 20 20"><path d="M1,4 L4,1 L16,1 L19,4 L19,19 L4,19 L1,16Z" fill="#fff" stroke="#333" stroke-width="1.2"/><path d="M4,19 L4,4 L19,4 M1,4 L4,4" fill="none" stroke="#333" stroke-width="0.9"/><path d="M7,11 L9,9 L17,9 L17,19 L7,19Z" fill="#9a9a9a" stroke="#333" stroke-width="1"/></svg>
<div class="t" style="left:107px;top:356.0px;font-size:16.3px;color:#333;font-weight:normal;font-style:normal;">Tube Extrude</div>
<svg style="position:absolute;left:81px;top:385.5px;opacity:1" width="21" height="22" viewBox="0 0 21 22"><path d="M1,4 L6,1 L20,3 L20,20 L15,21 L1,19Z" fill="#fff" stroke="#333" stroke-width="1.2"/><path d="M13,5 L20,3 M13,5 L13,21 M1,4 L13,5" fill="none" stroke="#333" stroke-width="1"/><path d="M13,5 L20,3 L20,20 L13,21Z" fill="#9a9a9a"/><circle cx="4.5" cy="8" r="1.6" fill="#333"/><circle cx="9" cy="8" r="1.6" fill="#333"/><circle cx="4.5" cy="13" r="1.6" fill="#333"/><circle cx="9" cy="13" r="1.6" fill="#333"/><path d="M15,17 L18,9 L18,18Z" fill="#333"/></svg>
<div class="t" style="left:107px;top:388.5px;font-size:16.3px;color:#333;font-weight:normal;font-style:normal;">1x1 Tube Convert</div>
<svg style="position:absolute;left:368px;top:383.5px;" width="9" height="26" viewBox="0 0 9 26"><path d="M4.5,0 L4.5,7 M4.5,19 L4.5,26" stroke="#2a2a2a" stroke-width="2.4" stroke-dasharray="2.2 1.6"/><circle cx="4.5" cy="13" r="4.2" fill="#2a2a2a"/></svg>
<svg style="position:absolute;left:55px;top:424px;" width="15" height="10" viewBox="0 0 15 10"><path d="M1.5,1.5 L7.5,7.5 L13.5,1.5" stroke="#555" stroke-width="2.4" fill="none"/></svg>
<svg style="position:absolute;left:82px;top:420px;" width="20" height="17" viewBox="0 0 20 17"><path d="M1,1.5 L7.5,1.5 L9.5,4 L19,4 L19,16 L1,16Z" fill="#fff" stroke="#444" stroke-width="1.3"/></svg>
<div class="t" style="left:108px;top:421.0px;font-size:16.3px;color:#333;font-weight:normal;font-style:normal;">Plate (6)</div>
<svg style="position:absolute;left:82px;top:451.5px;" width="21" height="21" viewBox="0 0 21 21"><path d="M4,15 L14,3 L18,6.5 L8,18.5 L3.5,19.5Z" fill="none" stroke="#aaa" stroke-width="1.3" stroke-linejoin="round"/><path d="M1,20.3 L20,20.3" stroke="#6b9be0" stroke-width="1.3"/></svg>
<div class="t" style="left:107px;top:453.5px;font-size:16.3px;color:#a9a9a9;font-weight:normal;font-style:normal;">Plate Sketch</div>
<svg style="position:absolute;left:82px;top:484px;opacity:1" width="20" height="20" viewBox="0 0 20 20"><path d="M1,4 L4,1 L16,1 L19,4 L19,19 L4,19 L1,16Z" fill="#fff" stroke="#333" stroke-width="1.2"/><path d="M4,19 L4,4 L19,4 M1,4 L4,4" fill="none" stroke="#333" stroke-width="0.9"/><path d="M7,11 L9,9 L17,9 L17,19 L7,19Z" fill="#9a9a9a" stroke="#333" stroke-width="1"/></svg>
<div class="t" style="left:107px;top:486.0px;font-size:16.3px;color:#333;font-weight:normal;font-style:normal;">Plate Extrude</div>
<svg style="position:absolute;left:82px;top:516.5px;" width="21" height="21" viewBox="0 0 21 21"><path d="M4,15 L14,3 L18,6.5 L8,18.5 L3.5,19.5Z" fill="none" stroke="#aaa" stroke-width="1.3" stroke-linejoin="round"/><path d="M1,20.3 L20,20.3" stroke="#6b9be0" stroke-width="1.3"/></svg>
<div class="t" style="left:107px;top:518.5px;font-size:16.3px;color:#a9a9a9;font-weight:normal;font-style:normal;">Plate Pocketing Sketch</div>
<svg style="position:absolute;left:80px;top:548px;" width="22" height="22" viewBox="0 0 22 22"><path d="M1,1 L6,1 L8,4 Q11,2.5 14,4 L16,1 L21,1 L18,8 Q19,14 14,17 L14,19 L21,19 L21,22 L1,22 L1,19 L8,19 L8,17 Q3,14 4,8Z" fill="#5f6b73"/><circle cx="11" cy="10.5" r="5" fill="#eef6fb"/></svg>
<div class="t" style="left:107px;top:551.3px;font-size:16px;color:#333;font-weight:bold;font-style:normal;">Part Lightening - 13 Ribs</div>
<svg style="position:absolute;left:368px;top:546px;" width="9" height="26" viewBox="0 0 9 26"><path d="M4.5,0 L4.5,7 M4.5,19 L4.5,26" stroke="#2a2a2a" stroke-width="2.4" stroke-dasharray="2.2 1.6"/><circle cx="4.5" cy="13" r="4.2" fill="#2a2a2a"/></svg>
<svg style="position:absolute;left:82px;top:581px;" width="20" height="21" viewBox="0 0 20 21"><path d="M1,3 L5,1 L9,3 L9,20 L3,20 L1,18Z M11,3 L15,1 L19,3 L19,18 L17,20 L11,20Z" fill="#fff" stroke="#b5b5b5" stroke-width="1.2"/><path d="M5,1 L5,20 M15,1 L15,20 M12,12 L18,8 L18,19" stroke="#b5b5b5" stroke-width="1.1" fill="none"/></svg>
<div class="t" style="left:107px;top:583.3px;font-size:16.5px;color:#a9a9a9;font-weight:normal;font-style:italic;">Plate Mirror</div>
<div style="position:absolute;left:79px;top:613px;width:22px;height:21px;border:1px solid #c5c5c5;background:#fff"></div>
<div class="t" style="left:90px;transform:translateX(-50%);top:618.4px;font-size:12.5px;color:#aaa;font-weight:normal;font-style:normal;">Am</div>
<div class="t" style="left:107px;top:615.6px;font-size:16.8px;color:#a9a9a9;font-weight:normal;font-style:italic;">Assembly mirror Plate</div>
<svg style="position:absolute;left:368px;top:611px;" width="9" height="26" viewBox="0 0 9 26"><path d="M4.5,0 L4.5,7 M4.5,19 L4.5,26" stroke="#2a2a2a" stroke-width="2.4" stroke-dasharray="2.2 1.6"/><circle cx="4.5" cy="13" r="4.2" fill="#2a2a2a"/></svg>
<svg style="position:absolute;left:55px;top:651.5px;" width="15" height="10" viewBox="0 0 15 10"><path d="M1.5,1.5 L7.5,7.5 L13.5,1.5" stroke="#555" stroke-width="2.4" fill="none"/></svg>
<svg style="position:absolute;left:82px;top:647.5px;" width="20" height="17" viewBox="0 0 20 17"><path d="M1,1.5 L7.5,1.5 L9.5,4 L19,4 L19,16 L1,16Z" fill="#fff" stroke="#444" stroke-width="1.3"/></svg>
<div class="t" style="left:108px;top:648.5px;font-size:16.3px;color:#333;font-weight:normal;font-style:normal;">2x1 Tube (2)</div>
<svg style="position:absolute;left:82px;top:679px;opacity:0.45" width="20" height="20" viewBox="0 0 20 20"><path d="M1,4 L4,1 L16,1 L19,4 L19,19 L4,19 L1,16Z" fill="#fff" stroke="#333" stroke-width="1.2"/><path d="M4,19 L4,4 L19,4 M1,4 L4,4" fill="none" stroke="#333" stroke-width="0.9"/><path d="M7,11 L9,9 L17,9 L17,19 L7,19Z" fill="#9a9a9a" stroke="#333" stroke-width="1"/></svg>
<div class="t" style="left:107px;top:680.8px;font-size:16.5px;color:#a9a9a9;font-weight:normal;font-style:italic;">2x1 Tube Extrude</div>
<svg style="position:absolute;left:81px;top:710.5px;opacity:0.45" width="21" height="22" viewBox="0 0 21 22"><path d="M1,4 L6,1 L20,3 L20,20 L15,21 L1,19Z" fill="#fff" stroke="#333" stroke-width="1.2"/><path d="M13,5 L20,3 M13,5 L13,21 M1,4 L13,5" fill="none" stroke="#333" stroke-width="1"/><path d="M13,5 L20,3 L20,20 L13,21Z" fill="#9a9a9a"/><circle cx="4.5" cy="8" r="1.6" fill="#333"/><circle cx="9" cy="8" r="1.6" fill="#333"/><circle cx="4.5" cy="13" r="1.6" fill="#333"/><circle cx="9" cy="13" r="1.6" fill="#333"/><path d="M15,17 L18,9 L18,18Z" fill="#333"/></svg>
<div class="t" style="left:107px;top:713.3px;font-size:16.5px;color:#a9a9a9;font-weight:normal;font-style:italic;">2x1 Convert</div>
<svg style="position:absolute;left:368px;top:708.5px;" width="9" height="26" viewBox="0 0 9 26"><path d="M4.5,0 L4.5,7 M4.5,19 L4.5,26" stroke="#2a2a2a" stroke-width="2.4" stroke-dasharray="2.2 1.6"/><circle cx="4.5" cy="13" r="4.2" fill="#2a2a2a"/></svg>
<svg style="position:absolute;left:55px;top:749px;" width="15" height="10" viewBox="0 0 15 10"><path d="M1.5,1.5 L7.5,7.5 L13.5,1.5" stroke="#555" stroke-width="2.4" fill="none"/></svg>
<svg style="position:absolute;left:82px;top:745px;" width="20" height="17" viewBox="0 0 20 17"><path d="M1,1.5 L7.5,1.5 L9.5,4 L19,4 L19,16 L1,16Z" fill="#fff" stroke="#444" stroke-width="1.3"/></svg>
<div class="t" style="left:108px;top:746.0px;font-size:16.3px;color:#333;font-weight:normal;font-style:normal;">Polycarb Floor (2)</div>
<svg style="position:absolute;left:82px;top:776.5px;" width="21" height="21" viewBox="0 0 21 21"><path d="M4,15 L14,3 L18,6.5 L8,18.5 L3.5,19.5Z" fill="none" stroke="#aaa" stroke-width="1.3" stroke-linejoin="round"/><path d="M1,20.3 L20,20.3" stroke="#6b9be0" stroke-width="1.3"/></svg>
<div class="t" style="left:107px;top:778.3px;font-size:16.5px;color:#a9a9a9;font-weight:normal;font-style:italic;">Sketch 6</div>
<svg style="position:absolute;left:82px;top:809px;opacity:0.45" width="20" height="20" viewBox="0 0 20 20"><path d="M1,4 L4,1 L16,1 L19,4 L19,19 L4,19 L1,16Z" fill="#fff" stroke="#333" stroke-width="1.2"/><path d="M4,19 L4,4 L19,4 M1,4 L4,4" fill="none" stroke="#333" stroke-width="0.9"/><path d="M7,11 L9,9 L17,9 L17,19 L7,19Z" fill="#9a9a9a" stroke="#333" stroke-width="1"/></svg>
<div class="t" style="left:107px;top:810.8px;font-size:16.5px;color:#a9a9a9;font-weight:normal;font-style:italic;">Extrude 6</div>
<svg style="position:absolute;left:55px;top:840px;" width="24" height="24" viewBox="0 0 24 24"><path d="M1.5,11 L6,2.5 Q9,0.5 15,3 Q19,5 19,8.5 L12.5,21.5" fill="none" stroke="#a0a0a0" stroke-width="1.6"/><path d="M6,3 Q5,6 10,8 Q15,10 18.5,8.5" fill="none" stroke="#b0b0b0" stroke-width="1"/><path d="M5,6.5 Q6,10 15,12 M4,11 L0.8,21.5 M13,10.5 L9.5,21.5" fill="none" stroke="#b5b5b5" stroke-width="0.9"/><ellipse cx="12" cy="5" rx="2" ry="1.2" fill="#b0b0b0"/></svg>
<div class="t" style="left:85.5px;top:843.3px;font-size:16.5px;color:#a9a9a9;font-weight:normal;font-style:italic;">?</div>
<svg style="position:absolute;left:368px;top:838.5px;" width="9" height="26" viewBox="0 0 9 26"><path d="M4.5,0 L4.5,7 M4.5,19 L4.5,26" stroke="#2a2a2a" stroke-width="2.4" stroke-dasharray="2.2 1.6"/><circle cx="4.5" cy="13" r="4.2" fill="#2a2a2a"/></svg>
<svg style="position:absolute;left:55px;top:872px;" width="24" height="24" viewBox="0 0 24 24"><path d="M9,4 L2,15 M17,5 L22,14.5 M7,21.5 L21,17" stroke="#b0b0b0" stroke-width="1.3"/><circle cx="13.7" cy="5.9" r="4.8" fill="#d0d0d0" stroke="#c0c0c0" stroke-width="0.8"/><circle cx="6.4" cy="17.3" r="5" fill="#d0d0d0" stroke="#c0c0c0" stroke-width="0.8"/><circle cx="19.7" cy="15.8" r="2.8" fill="#d0d0d0" stroke="#c0c0c0" stroke-width="0.8"/></svg>
<div class="t" style="left:85.5px;top:875.8px;font-size:16.5px;color:#a9a9a9;font-weight:normal;font-style:italic;">?</div>
<svg style="position:absolute;left:368px;top:871px;" width="9" height="26" viewBox="0 0 9 26"><path d="M4.5,0 L4.5,7 M4.5,19 L4.5,26" stroke="#2a2a2a" stroke-width="2.4" stroke-dasharray="2.2 1.6"/><circle cx="4.5" cy="13" r="4.2" fill="#2a2a2a"/></svg>
<svg style="position:absolute;left:55px;top:944px;" width="15" height="10" viewBox="0 0 15 10"><path d="M1.5,1.5 L7.5,7.5 L13.5,1.5" stroke="#555" stroke-width="2.4" fill="none"/></svg>
<div class="t" style="left:79px;top:940.0px;font-size:16.5px;color:#333;font-weight:normal;font-style:normal;">Parts (3)</div>
<svg style="position:absolute;left:81px;top:971px;" width="20" height="20" viewBox="0 0 20 20"><path d="M1,12 L5,8 L7,8 L7,3 L11,0.8 L19,0.8 L19,15 L15,19 L1,19Z" fill="#fff" stroke="#444" stroke-width="1.2"/><path d="M1,12 L15,12 L15,19 M15,12 L19,8 M7,8 L7,12 M11,0.8 L11,8 L7,8 M11,4 L15,4 L19,0.8 M15,4 L15,12" fill="none" stroke="#444" stroke-width="1"/></svg>
<div class="t" style="left:106.5px;top:973.2px;font-size:16.3px;color:#333;font-weight:normal;font-style:normal;">Origin Cube</div>
<svg style="position:absolute;left:81px;top:1003.5px;" width="20" height="20" viewBox="0 0 20 20"><path d="M1,12 L5,8 L7,8 L7,3 L11,0.8 L19,0.8 L19,15 L15,19 L1,19Z" fill="#fff" stroke="#444" stroke-width="1.2"/><path d="M1,12 L15,12 L15,19 M15,12 L19,8 M7,8 L7,12 M11,0.8 L11,8 L7,8 M11,4 L15,4 L19,0.8 M15,4 L15,12" fill="none" stroke="#444" stroke-width="1"/></svg>
<div class="t" style="left:106.5px;top:1005.4px;font-size:16.3px;color:#333;font-weight:normal;font-style:normal;">Tube 1"x1"x12"</div>
<svg style="position:absolute;left:81px;top:1036px;" width="20" height="20" viewBox="0 0 20 20"><path d="M1,12 L5,8 L7,8 L7,3 L11,0.8 L19,0.8 L19,15 L15,19 L1,19Z" fill="#fff" stroke="#444" stroke-width="1.2"/><path d="M1,12 L15,12 L15,19 M15,12 L19,8 M7,8 L7,12 M11,0.8 L11,8 L7,8 M11,4 L15,4 L19,0.8 M15,4 L15,12" fill="none" stroke="#444" stroke-width="1"/></svg>
<div class="t" style="left:106.5px;top:1037.9px;font-size:16.3px;color:#333;font-weight:normal;font-style:normal;">Plate</div>
<div style="position:absolute;left:450px;top:641px;width:41px;height:42px;background:#fff;border:1px solid #d0d0d0;border-left:none"></div>
<svg style="position:absolute;left:459px;top:652px;" width="22" height="22" viewBox="0 0 22 22"><path d="M3,2 L5,5 L7,2" stroke="#333" stroke-width="1.3" fill="none"/><path d="M5,6 L5,21" stroke="#333" stroke-width="1.8"/><path d="M9,8 L20,8 M9,14 L20,14 M9,20 L20,20" stroke="#ccc" stroke-width="1.5"/></svg>
<div style="position:absolute;left:468px;top:100px;width:275px;height:582px;background:#fff;box-shadow:0 2px 10px rgba(0,0,0,0.28)"></div>
<div class="t" style="left:475.4px;top:112.1px;font-size:15.2px;color:#2b2b2b;font-weight:bold;font-style:normal;">Part Lightening - 13 Ribs</div>
<div style="position:absolute;left:673px;top:100px;width:35px;height:35px;background:#078a07"></div>
<svg style="position:absolute;left:680px;top:109px;" width="21" height="17" viewBox="0 0 21 17"><path d="M2,8.5 L8,14 L19,2.5" stroke="#fff" stroke-width="3.6" fill="none"/></svg>
<svg style="position:absolute;left:718px;top:111px;" width="15" height="15" viewBox="0 0 15 15"><path d="M1.5,1.5 L13.5,13.5 M13.5,1.5 L1.5,13.5" stroke="#c62828" stroke-width="3.2"/></svg>
<div style="position:absolute;left:468px;top:135px;width:275px;height:1px;background:#dcdcdc"></div>
<div class="t" style="left:604.6px;transform:translateX(-50%);top:145.7px;font-size:14.3px;color:#1a56b8;font-weight:bold;font-style:normal;">Manual</div>
<div style="position:absolute;left:468px;top:165.5px;width:275px;height:3px;background:#1a56b8"></div>
<div style="position:absolute;left:471.5px;top:177px;width:267px;height:53.5px;border:1px solid #d8d8d8;border-radius:3px"></div>
<div class="t" style="left:478.4px;top:186.2px;font-size:12.5px;color:#555;font-weight:normal;font-style:normal;">Face to lighten</div>
<div class="t" style="left:480.4px;top:206.9px;font-size:16.2px;color:#555;font-weight:normal;font-style:normal;">Face of Plate Extrude</div>
<svg style="position:absolute;left:713px;top:210px;" width="11" height="11" viewBox="0 0 11 11"><path d="M1,1 L10,10 M10,1 L1,10" stroke="#555" stroke-width="1.5"/></svg>
<div style="position:absolute;left:472.8px;top:248px;width:15.2px;height:14.5px;border:1px solid #555;border-radius:3px;background:#fff"></div>
<div class="t" style="left:493px;top:246.8px;font-size:16.2px;color:#555;font-weight:normal;font-style:normal;">Exclude face regions</div>
<div style="position:absolute;left:471.5px;top:278.5px;width:267px;height:128px;border:1.5px solid #2b5fb3;border-radius:3px;background:#dfeefa;overflow:hidden"></div>
<div style="position:absolute;left:473px;top:331px;width:264px;height:30px;background:#e9f3fb"></div>
<div style="position:absolute;left:473px;top:390.5px;width:264px;height:15px;background:#e9f3fb"></div>
<div class="t" style="left:478.4px;top:287.2px;font-size:12.5px;color:#555;font-weight:normal;font-style:normal;">Rib lines</div>
<div class="t" style="left:480.4px;top:307.9px;font-size:16.2px;color:#555;font-weight:normal;font-style:normal;">Edge of Plate Pocketing Sketch</div>
<svg style="position:absolute;left:713px;top:311.1px;" width="11" height="11" viewBox="0 0 11 11"><path d="M1,1 L10,10 M10,1 L1,10" stroke="#555" stroke-width="1.5"/></svg>
<div class="t" style="left:480.4px;top:337.9px;font-size:16.2px;color:#555;font-weight:normal;font-style:normal;">Edge of Plate Pocketing Sketch</div>
<svg style="position:absolute;left:713px;top:341.1px;" width="11" height="11" viewBox="0 0 11 11"><path d="M1,1 L10,10 M10,1 L1,10" stroke="#555" stroke-width="1.5"/></svg>
<div class="t" style="left:480.4px;top:367.9px;font-size:16.2px;color:#555;font-weight:normal;font-style:normal;">Edge of Plate Pocketing Sketch</div>
<svg style="position:absolute;left:713px;top:371.1px;" width="11" height="11" viewBox="0 0 11 11"><path d="M1,1 L10,10 M10,1 L1,10" stroke="#555" stroke-width="1.5"/></svg>
<div style="position:absolute;left:473px;top:392px;width:264px;height:13px;overflow:hidden"><div class="t" style="left:7.4px;top:5.9px;font-size:16.2px;color:#555">Edge of Plate Pocketing Sketch</div><svg style="position:absolute;left:240px;top:10px" width="11" height="11"><path d="M1,1 L10,10 M10,1 L1,10" stroke="#555" stroke-width="1.5"/></svg></div><div class="t" style="left:474.5px;top:424.8px;font-size:15px;color:#555;font-weight:normal;font-style:normal;">Thickness of walls</div>
<div class="t" style="right:1694.3px;top:424.0px;font-size:16px;color:#444;font-weight:normal;font-style:normal;">0.188 in</div>
<div style="position:absolute;left:602.5px;top:445.5px;width:107.5px;height:1px;background:#cfcfcf"></div>
<div class="t" style="left:474.5px;top:457.8px;font-size:15px;color:#555;font-weight:normal;font-style:normal;">Thickness of ribs</div>
<div class="t" style="right:1694.3px;top:457.0px;font-size:16px;color:#444;font-weight:normal;font-style:normal;">0.188 in</div>
<div style="position:absolute;left:591px;top:478.5px;width:119px;height:1px;background:#cfcfcf"></div>
<div style="position:absolute;left:472.8px;top:490px;width:15.2px;height:14.5px;border:1px solid #555;border-radius:3px;background:#fff"></div>
<div class="t" style="left:493px;top:487.9px;font-size:16.2px;color:#555;font-weight:normal;font-style:normal;">Overide fillet radius</div>
<div class="t" style="left:474.5px;top:524.9px;font-size:15px;color:#555;font-weight:normal;font-style:normal;">Tool diameter</div>
<div class="t" style="right:1694.3px;top:524.1px;font-size:16px;color:#444;font-weight:normal;font-style:normal;">0.26 in</div>
<div style="position:absolute;left:572px;top:545.6px;width:138px;height:1px;background:#cfcfcf"></div>
<div style="position:absolute;left:472.8px;top:556px;width:15.2px;height:14.5px;border:1px solid #555;border-radius:3px;background:#fff"></div>
<div class="t" style="left:493px;top:554.7px;font-size:16.2px;color:#555;font-weight:normal;font-style:normal;">Lighten multiple bodies</div>
<div class="t" style="left:475.4px;top:587.5px;font-size:16.8px;color:#333;font-weight:normal;font-style:normal;">Blind</div>
<svg style="position:absolute;left:693px;top:592px;" width="11" height="6" viewBox="0 0 11 6"><path d="M0,0 L11,0 L5.5,6Z" fill="#333"/></svg>
<div style="position:absolute;left:468px;top:611px;width:242px;height:1px;background:#cfcfcf"></div>
<div class="t" style="left:474.5px;top:626.3px;font-size:15px;color:#555;font-weight:normal;font-style:normal;">Cut depth</div>
<div class="t" style="right:1694.3px;top:625.5px;font-size:16px;color:#444;font-weight:normal;font-style:normal;">1 in</div>
<div style="position:absolute;left:544px;top:647px;width:166px;height:1px;background:#cfcfcf"></div>
<div style="position:absolute;left:476px;top:665px;width:140px;height:3px;background:#666"></div>
<div style="position:absolute;left:566px;top:659px;width:15px;height:15px;border:1.5px solid #666;border-radius:50%;background:#fff"></div>
<div style="position:absolute;left:649px;top:651px;width:61px;height:26.5px;border:1px solid #aaa;border-radius:4px;background:#fff"></div>
<div class="t" style="left:679.5px;transform:translateX(-50%);top:656.9px;font-size:15.5px;color:#333;font-weight:normal;font-style:normal;">Final</div>
<div style="position:absolute;left:1019px;top:107px;width:362px;height:36px;background:#dfeffa;border:1.5px solid #b3daf5;border-radius:6px"></div>
<svg style="position:absolute;left:1034px;top:114px;" width="20" height="20" viewBox="0 0 20 20"><circle cx="10" cy="10" r="10" fill="#7a9ccb"/><rect x="8.7" y="8.5" width="2.8" height="7" fill="#fff"/><circle cx="10" cy="5.6" r="1.6" fill="#fff"/><path d="M7.5,9 L11.5,9 M7.5,15.5 L12.5,15.5" stroke="#fff" stroke-width="1.3"/></svg>
<div class="t" style="left:1068.3px;top:116.6px;font-size:17px;color:#1e3a66;font-weight:normal;font-style:normal;">Weight of parts reduced by 55.9%.</div>
<svg style="position:absolute;left:1359px;top:119px;" width="14" height="14" viewBox="0 0 14 14"><path d="M1.5,1.5 L12.5,12.5 M12.5,1.5 L1.5,12.5" stroke="#3c6cb0" stroke-width="2.4"/></svg>
<svg style="position:absolute;left:2190px;top:112px;" width="195" height="195" viewBox="0 0 195 195">
<path d="M88.6,15 L97.3,3.2 L106,15Z" fill="#e2e8ef"/>
<path d="M88.6,177.5 L97.3,189.6 L106,177.5Z" fill="#e2e8ef"/>
<path d="M16,87 L3.8,96.3 L16,105Z" fill="#e2e8ef"/>
<path d="M179,87 L191,96.3 L179,105Z" fill="#e2e8ef"/>
<path d="M72,20 Q50,28 37,40" stroke="#e2e8ef" stroke-width="7" fill="none"/><path d="M30.5,44.5 L45,41 L36,33Z" fill="#e2e8ef"/>
<path d="M123,20 Q145,28 158,40" stroke="#e2e8ef" stroke-width="7" fill="none"/><path d="M164.5,44.5 L150,41 L159,33Z" fill="#e2e8ef"/>
</svg>
<svg style="position:absolute;left:2252px;top:173px;" width="72" height="72" viewBox="0 0 72 72"><path d="M12,0 L59,0 Q59,12 71,12 L71,60 Q59,60 59,72 L12,72 Q12,60 0,60 L0,12 Q12,12 12,0Z" fill="#e2e8ef"/><rect x="7.5" y="7.8" width="55" height="55.5" rx="11" fill="#fff"/></svg>
<div class="t" style="left:2287.5px;transform:translateX(-50%);top:200.0px;font-size:16px;color:#444;font-weight:normal;font-style:normal;">Right</div>
<div style="position:absolute;left:2248.5px;top:173px;width:2px;height:74px;background:#3a3ad8"></div>
<div style="position:absolute;left:2248.5px;top:245px;width:75px;height:2px;background:#3aaa3a"></div>
<div class="t" style="left:2248.7px;transform:translateX(-50%);top:153.0px;font-size:16px;color:#3a3ad8;font-weight:normal;font-style:normal;">Z</div>
<div class="t" style="left:2335px;transform:translateX(-50%);top:239.0px;font-size:16px;color:#3aaa3a;font-weight:normal;font-style:normal;">Y</div>
<svg style="position:absolute;left:2331px;top:279px;" width="25" height="24" viewBox="0 0 25 24"><path d="M12.5,1 L24,5 L24,18 L12.5,23 L1,18 L1,5Z" fill="#fff" stroke="#333" stroke-width="1.3"/><path d="M1,5 L12.5,9.5 L24,5 M12.5,9.5 L12.5,23" fill="none" stroke="#333" stroke-width="1.1"/><path d="M1,5 L12.5,9.5 L12.5,23 L1,18Z" fill="#9a9a9a"/><path d="M12.5,9.5 L24,5 L24,18 L12.5,23Z" fill="#d6d6d6"/></svg>
<svg style="position:absolute;left:2365px;top:288px;" width="10" height="6" viewBox="0 0 10 6"><path d="M0,0 L10,0 L5,6Z" fill="#333"/></svg>
<div style="position:absolute;left:2360.5px;top:531px;width:40px;height:42px;border:1px solid #bdbdbd;background:#fff"></div>
<div style="position:absolute;left:2360.5px;top:572px;width:40px;height:43.60000000000002px;border:1px solid #bdbdbd;background:#fff"></div>
<div style="position:absolute;left:2360.5px;top:614.6px;width:40px;height:41.60000000000002px;border:1px solid #bdbdbd;background:#fff"></div>
<div style="position:absolute;left:2360.5px;top:655.2px;width:40px;height:41.799999999999955px;border:1px solid #bdbdbd;background:#fff"></div>
<div style="position:absolute;left:2360.5px;top:710px;width:40px;height:42px;border:1px solid #bdbdbd;background:#fff"></div>
<div style="position:absolute;left:2360.5px;top:751px;width:40px;height:43px;border:1px solid #bdbdbd;background:#fff"></div>
<svg style="position:absolute;left:2368px;top:541px;" width="26" height="24" viewBox="0 0 26 24"><path d="M6,14 L14,1 L24,14Z" fill="#999"/><path d="M9,14 L17,3 L22,14Z" fill="#bbb"/><rect x="1" y="14" width="24" height="9" rx="2" fill="#fff" stroke="#333" stroke-width="1.2"/><circle cx="5" cy="18.5" r="1.6" fill="none" stroke="#333"/><rect x="17" y="15" width="7" height="7" fill="#ddd"/></svg>
<svg style="position:absolute;left:2367px;top:583px;" width="26" height="24" viewBox="0 0 26 24"><rect x="1" y="1" width="12" height="9" fill="#3b7ad0"/><path d="M1,4 L13,4 M1,7 L13,7 M5,1 L5,10 M9,1 L9,10" stroke="#fff" stroke-width="0.8"/><path d="M7,10 L16,6 L25,10 L25,19 L16,23 L7,19Z M7,10 L16,14 L25,10 M16,14 L16,23" fill="none" stroke="#333" stroke-width="1.3"/></svg>
<svg style="position:absolute;left:2367px;top:624px;" width="26" height="24" viewBox="0 0 26 24"><rect x="1" y="1" width="12" height="9" fill="#555"/><path d="M1,4 L13,4 M1,7 L13,7 M5,1 L5,10 M9,1 L9,10" stroke="#fff" stroke-width="0.8"/><path d="M8,11 L15,8 L22,11 L22,18 L15,21 L8,18Z M8,11 L15,14 L22,11 M15,14 L15,21" fill="none" stroke="#333" stroke-width="1.2"/><path d="M3,12 Q1,12 1,15 L1,22 M24,8 Q26,8 26,11 L26,20" stroke="#333" stroke-width="1.2" fill="none"/></svg>
<svg style="position:absolute;left:2367px;top:665px;" width="26" height="24" viewBox="0 0 26 24"><rect x="1" y="1" width="12" height="9" fill="#555"/><path d="M1,4 L13,4 M1,7 L13,7 M5,1 L5,10 M9,1 L9,10" stroke="#fff" stroke-width="0.8"/><path d="M3,6 Q0,14 3,23 M22,6 Q26,14 22,23" stroke="#333" stroke-width="2" fill="none"/><path d="M7,12 Q12,10 12,18 Q12,23 17,22 M17,11 Q12,16 8,22" stroke="#222" stroke-width="2.2" fill="none"/></svg>
<div style="position:absolute;left:2366px;top:716px;width:29px;height:30px;background:#dcdcdc;border-radius:4px"></div>
<svg style="position:absolute;left:2368px;top:718px;" width="25" height="25" viewBox="0 0 25 25"><path d="M12.5,12.5 L12.5,0.5 A12,12 0 0,1 24.5,12.5Z" fill="#4fb3ea"/><path d="M12.5,12.5 L24.5,12.5 A12,12 0 0,1 12.5,24.5Z" fill="#4fb3ea"/><path d="M12.5,12.5 L12.5,24.5 A12,12 0 0,1 0.5,12.5Z" fill="#f0b840"/><path d="M12.5,12.5 L0.5,12.5 A12,12 0 0,1 12.5,0.5Z" fill="#dd4a3a"/><path d="M12.5,12.5 L3.5,4.5 A12,12 0 0,1 21.5,4.5Z" fill="#7cc850"/><path d="M3,3 L22,22 M22,3 L3,22" stroke="#dcdcdc" stroke-width="1.8"/></svg>
<div style="position:absolute;left:2366px;top:757px;width:29px;height:30px;background:#dcdcdc;border-radius:4px"></div>
<div style="position:absolute;left:2368px;top:760px;width:25px;height:24px;background:#1a5fd8;border:2px solid #111"></div>
<div class="t" style="left:2380.5px;transform:translateX(-50%);top:766.3px;font-size:15px;color:#fff;font-weight:bold;font-style:normal;font-family:"Liberation Serif";letter-spacing:-1px">MK</div>
<svg style="position:absolute;left:2362px;top:1223px;" width="26" height="16" viewBox="0 0 26 16"><path d="M1,15 A12,12 0 0,1 25,15Z" fill="none" stroke="#333" stroke-width="1.5"/><path d="M6,15 A7,7 0 0,1 20,15" fill="none" stroke="#333" stroke-width="1.3"/><path d="M10,15 Q13,10 16,15" fill="#333"/></svg>
<div style="position:absolute;left:50px;top:1249px;width:2348px;height:38px;background:#d6d6d6;border-top:1px solid #c9c9c9"></div>
<div style="position:absolute;left:50px;top:1250px;width:43px;height:37px;background:#d0d0d0"></div>
<svg style="position:absolute;left:60px;top:1256px;" width="22" height="22" viewBox="0 0 22 22"><path d="M11,2 L11,20 M2,11 L20,11" stroke="#555" stroke-width="3"/></svg>
<div style="position:absolute;left:93px;top:1250px;width:43px;height:37px;background:#e6e6e6"></div>
<svg style="position:absolute;left:104px;top:1253px;" width="24" height="23" viewBox="0 0 24 23"><path d="M12,1 L23,11 L23,22 L15,22 L15,15 L9,22 L9,22 L1,22 L1,11Z" fill="#666"/><rect x="17" y="2" width="3" height="7" fill="#666"/><rect x="9.5" y="14" width="5" height="9" fill="#e6e6e6"/></svg>
<svg style="position:absolute;left:134px;top:1250px;" width="178" height="37" viewBox="0 0 178 37"><path d="M0,0 L161,0 L174,18.5 L161,37 L0,37 L13,18.5Z" fill="#fff"/></svg>
<div class="t" style="left:162.5px;top:1257.6px;font-size:17px;color:#666;font-weight:normal;font-style:normal;">Exercise 1: Flat</div>
<div style="position:absolute;left:309px;top:1250px;width:247px;height:37px;background:#e9e9e9;border-radius:0 0 6px 6px"></div>
<svg style="position:absolute;left:322px;top:1256px;" width="24" height="24" viewBox="0 0 24 24"><path d="M1,5 L5,1 L18,1 L22,5 L22,22 L18,22 L1,22Z" fill="#fff" stroke="#333" stroke-width="1.3"/><path d="M1,5 L18,5 L22,1 M18,5 L18,22" fill="none" stroke="#333" stroke-width="1.1"/><path d="M2,6 L17,6 L17,15 L2,15Z" fill="#999"/><path d="M5,1 L18,1 L17,5 L1,5Z" fill="#bbb"/></svg>
<div class="t" style="left:350px;top:1259.6px;font-size:17px;color:#666;font-weight:normal;font-style:normal;">Exercise 1 Assembly</div>
<div style="position:absolute;left:561px;top:1250px;width:250px;height:37px;background:#fff"></div>
<div style="position:absolute;left:562px;top:1283px;width:248px;height:3px;background:#1a56b8;border-radius:2px"></div>
<svg style="position:absolute;left:576px;top:1255px;" width="23" height="24" viewBox="0 0 23 24"><path d="M1,7 L4,5 L10,6 L10,23 L4,23 L1,21Z M4,5 L4,23" fill="none" stroke="#444" stroke-width="1.2"/><path d="M11,3 L16,1 L21,3 L21,23 L11,23Z M16,1 L16,23" fill="none" stroke="#444" stroke-width="1.2"/></svg>
<div class="t" style="left:603px;top:1259.6px;font-size:17px;color:#333;font-weight:normal;font-style:normal;">Exercise 1 Part Studio</div>
<div style="position:absolute;left:2360px;top:1249px;width:38px;height:38px;background:#d6d6d6;border-bottom-right-radius:8px"></div>
<div style="position:absolute;left:2398.5px;top:0px;width:1.5px;height:145px;background:#4a8a4a"></div>
<div style="position:absolute;left:2399px;top:145px;width:1px;height:1142px;background:#b5b5b5"></div>
<div style="position:absolute;left:50px;top:1286px;width:2350px;height:1px;background:#9a9a9a"></div>
</body></html>
